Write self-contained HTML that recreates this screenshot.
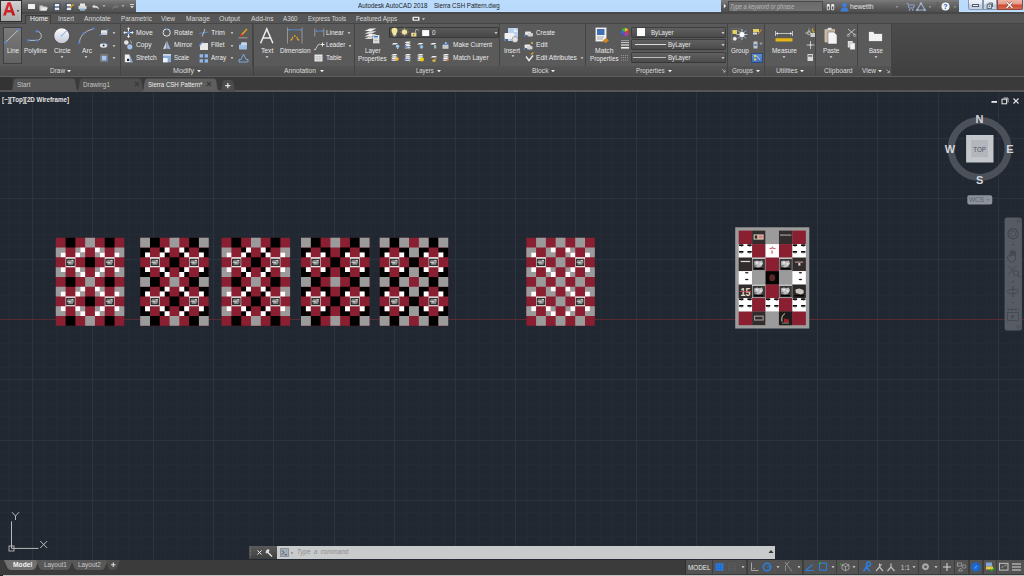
<!DOCTYPE html>
<html><head><meta charset="utf-8">
<style>
*{margin:0;padding:0;box-sizing:border-box}
html,body{width:1024px;height:576px;overflow:hidden;background:#222831;font-family:"Liberation Sans",sans-serif}
.a{position:absolute}
.t{position:absolute;white-space:nowrap;color:#e8e8e8;font-size:6.35px;line-height:6.35px}
svg{overflow:visible}
</style></head><body>
<svg class="a" style="left:0;top:0" width="1024" height="576" viewBox="0 0 1024 576" shape-rendering="crispEdges">
<rect x="-16.52" y="91" width="1" height="469" fill="#252b34"/>
<rect x="-4.44" y="91" width="1" height="469" fill="#252b34"/>
<rect x="7.64" y="91" width="1" height="469" fill="#252b34"/>
<rect x="19.72" y="91" width="1" height="469" fill="#252b34"/>
<rect x="43.88" y="91" width="1" height="469" fill="#252b34"/>
<rect x="55.96" y="91" width="1" height="469" fill="#252b34"/>
<rect x="68.04" y="91" width="1" height="469" fill="#252b34"/>
<rect x="80.12" y="91" width="1" height="469" fill="#252b34"/>
<rect x="104.28" y="91" width="1" height="469" fill="#252b34"/>
<rect x="116.36" y="91" width="1" height="469" fill="#252b34"/>
<rect x="128.44" y="91" width="1" height="469" fill="#252b34"/>
<rect x="140.52" y="91" width="1" height="469" fill="#252b34"/>
<rect x="164.68" y="91" width="1" height="469" fill="#252b34"/>
<rect x="176.76" y="91" width="1" height="469" fill="#252b34"/>
<rect x="188.84" y="91" width="1" height="469" fill="#252b34"/>
<rect x="200.92" y="91" width="1" height="469" fill="#252b34"/>
<rect x="225.08" y="91" width="1" height="469" fill="#252b34"/>
<rect x="237.16" y="91" width="1" height="469" fill="#252b34"/>
<rect x="249.24" y="91" width="1" height="469" fill="#252b34"/>
<rect x="261.32" y="91" width="1" height="469" fill="#252b34"/>
<rect x="285.48" y="91" width="1" height="469" fill="#252b34"/>
<rect x="297.56" y="91" width="1" height="469" fill="#252b34"/>
<rect x="309.64" y="91" width="1" height="469" fill="#252b34"/>
<rect x="321.72" y="91" width="1" height="469" fill="#252b34"/>
<rect x="345.88" y="91" width="1" height="469" fill="#252b34"/>
<rect x="357.96" y="91" width="1" height="469" fill="#252b34"/>
<rect x="370.04" y="91" width="1" height="469" fill="#252b34"/>
<rect x="382.12" y="91" width="1" height="469" fill="#252b34"/>
<rect x="406.28" y="91" width="1" height="469" fill="#252b34"/>
<rect x="418.36" y="91" width="1" height="469" fill="#252b34"/>
<rect x="430.44" y="91" width="1" height="469" fill="#252b34"/>
<rect x="442.52" y="91" width="1" height="469" fill="#252b34"/>
<rect x="466.68" y="91" width="1" height="469" fill="#252b34"/>
<rect x="478.76" y="91" width="1" height="469" fill="#252b34"/>
<rect x="490.84" y="91" width="1" height="469" fill="#252b34"/>
<rect x="502.92" y="91" width="1" height="469" fill="#252b34"/>
<rect x="527.08" y="91" width="1" height="469" fill="#252b34"/>
<rect x="539.16" y="91" width="1" height="469" fill="#252b34"/>
<rect x="551.24" y="91" width="1" height="469" fill="#252b34"/>
<rect x="563.32" y="91" width="1" height="469" fill="#252b34"/>
<rect x="587.48" y="91" width="1" height="469" fill="#252b34"/>
<rect x="599.56" y="91" width="1" height="469" fill="#252b34"/>
<rect x="611.64" y="91" width="1" height="469" fill="#252b34"/>
<rect x="623.72" y="91" width="1" height="469" fill="#252b34"/>
<rect x="647.88" y="91" width="1" height="469" fill="#252b34"/>
<rect x="659.96" y="91" width="1" height="469" fill="#252b34"/>
<rect x="672.04" y="91" width="1" height="469" fill="#252b34"/>
<rect x="684.12" y="91" width="1" height="469" fill="#252b34"/>
<rect x="708.28" y="91" width="1" height="469" fill="#252b34"/>
<rect x="720.36" y="91" width="1" height="469" fill="#252b34"/>
<rect x="732.44" y="91" width="1" height="469" fill="#252b34"/>
<rect x="744.52" y="91" width="1" height="469" fill="#252b34"/>
<rect x="768.68" y="91" width="1" height="469" fill="#252b34"/>
<rect x="780.76" y="91" width="1" height="469" fill="#252b34"/>
<rect x="792.84" y="91" width="1" height="469" fill="#252b34"/>
<rect x="804.92" y="91" width="1" height="469" fill="#252b34"/>
<rect x="829.08" y="91" width="1" height="469" fill="#252b34"/>
<rect x="841.16" y="91" width="1" height="469" fill="#252b34"/>
<rect x="853.24" y="91" width="1" height="469" fill="#252b34"/>
<rect x="865.32" y="91" width="1" height="469" fill="#252b34"/>
<rect x="889.48" y="91" width="1" height="469" fill="#252b34"/>
<rect x="901.56" y="91" width="1" height="469" fill="#252b34"/>
<rect x="913.64" y="91" width="1" height="469" fill="#252b34"/>
<rect x="925.72" y="91" width="1" height="469" fill="#252b34"/>
<rect x="949.88" y="91" width="1" height="469" fill="#252b34"/>
<rect x="961.96" y="91" width="1" height="469" fill="#252b34"/>
<rect x="974.04" y="91" width="1" height="469" fill="#252b34"/>
<rect x="986.12" y="91" width="1" height="469" fill="#252b34"/>
<rect x="1010.28" y="91" width="1" height="469" fill="#252b34"/>
<rect x="1022.36" y="91" width="1" height="469" fill="#252b34"/>
<rect x="0" y="89.38" width="1024" height="1" fill="#252b34"/>
<rect x="0" y="101.46" width="1024" height="1" fill="#252b34"/>
<rect x="0" y="113.54" width="1024" height="1" fill="#252b34"/>
<rect x="0" y="125.62" width="1024" height="1" fill="#252b34"/>
<rect x="0" y="149.78" width="1024" height="1" fill="#252b34"/>
<rect x="0" y="161.86" width="1024" height="1" fill="#252b34"/>
<rect x="0" y="173.94" width="1024" height="1" fill="#252b34"/>
<rect x="0" y="186.02" width="1024" height="1" fill="#252b34"/>
<rect x="0" y="210.18" width="1024" height="1" fill="#252b34"/>
<rect x="0" y="222.26" width="1024" height="1" fill="#252b34"/>
<rect x="0" y="234.34" width="1024" height="1" fill="#252b34"/>
<rect x="0" y="246.42" width="1024" height="1" fill="#252b34"/>
<rect x="0" y="270.58" width="1024" height="1" fill="#252b34"/>
<rect x="0" y="282.66" width="1024" height="1" fill="#252b34"/>
<rect x="0" y="294.74" width="1024" height="1" fill="#252b34"/>
<rect x="0" y="306.82" width="1024" height="1" fill="#252b34"/>
<rect x="0" y="330.98" width="1024" height="1" fill="#252b34"/>
<rect x="0" y="343.06" width="1024" height="1" fill="#252b34"/>
<rect x="0" y="355.14" width="1024" height="1" fill="#252b34"/>
<rect x="0" y="367.22" width="1024" height="1" fill="#252b34"/>
<rect x="0" y="391.38" width="1024" height="1" fill="#252b34"/>
<rect x="0" y="403.46" width="1024" height="1" fill="#252b34"/>
<rect x="0" y="415.54" width="1024" height="1" fill="#252b34"/>
<rect x="0" y="427.62" width="1024" height="1" fill="#252b34"/>
<rect x="0" y="451.78" width="1024" height="1" fill="#252b34"/>
<rect x="0" y="463.86" width="1024" height="1" fill="#252b34"/>
<rect x="0" y="475.94" width="1024" height="1" fill="#252b34"/>
<rect x="0" y="488.02" width="1024" height="1" fill="#252b34"/>
<rect x="0" y="512.18" width="1024" height="1" fill="#252b34"/>
<rect x="0" y="524.26" width="1024" height="1" fill="#252b34"/>
<rect x="0" y="536.34" width="1024" height="1" fill="#252b34"/>
<rect x="0" y="548.42" width="1024" height="1" fill="#252b34"/>
<rect x="-28.60" y="91" width="1" height="469" fill="#2b3240"/>
<rect x="31.80" y="91" width="1" height="469" fill="#2b3240"/>
<rect x="92.20" y="91" width="1" height="469" fill="#2b3240"/>
<rect x="152.60" y="91" width="1" height="469" fill="#2b3240"/>
<rect x="213.00" y="91" width="1" height="469" fill="#2b3240"/>
<rect x="273.40" y="91" width="1" height="469" fill="#2b3240"/>
<rect x="333.80" y="91" width="1" height="469" fill="#2b3240"/>
<rect x="394.20" y="91" width="1" height="469" fill="#2b3240"/>
<rect x="454.60" y="91" width="1" height="469" fill="#2b3240"/>
<rect x="515.00" y="91" width="1" height="469" fill="#2b3240"/>
<rect x="575.40" y="91" width="1" height="469" fill="#2b3240"/>
<rect x="635.80" y="91" width="1" height="469" fill="#2b3240"/>
<rect x="696.20" y="91" width="1" height="469" fill="#2b3240"/>
<rect x="756.60" y="91" width="1" height="469" fill="#2b3240"/>
<rect x="817.00" y="91" width="1" height="469" fill="#2b3240"/>
<rect x="877.40" y="91" width="1" height="469" fill="#2b3240"/>
<rect x="937.80" y="91" width="1" height="469" fill="#2b3240"/>
<rect x="998.20" y="91" width="1" height="469" fill="#2b3240"/>
<rect x="0" y="77.30" width="1024" height="1" fill="#2b3240"/>
<rect x="0" y="137.70" width="1024" height="1" fill="#2b3240"/>
<rect x="0" y="198.10" width="1024" height="1" fill="#2b3240"/>
<rect x="0" y="258.50" width="1024" height="1" fill="#2b3240"/>
<rect x="0" y="318.90" width="1024" height="1" fill="#2b3240"/>
<rect x="0" y="379.30" width="1024" height="1" fill="#2b3240"/>
<rect x="0" y="439.70" width="1024" height="1" fill="#2b3240"/>
<rect x="0" y="500.10" width="1024" height="1" fill="#2b3240"/>
<rect x="0" y="560.50" width="1024" height="1" fill="#2b3240"/>
<rect x="0" y="318.9" width="1024" height="1" fill="#5a2a33"/>
<g shape-rendering="geometricPrecision">
<rect x="55.80" y="237.80" width="68.50" height="88.00" fill="#891f30"/>
<path d="M65.59 237.80h9.79v9.78h-9.79zM104.73 237.80h9.79v9.78h-9.79zM85.16 257.36h9.79v9.78h-9.79zM65.59 276.91h9.79v9.78h-9.79zM104.73 276.91h9.79v9.78h-9.79zM85.16 296.47h9.79v9.78h-9.79zM65.59 316.02h9.79v9.78h-9.79zM104.73 316.02h9.79v9.78h-9.79z" fill="#000000"/>
<path d="M85.16 237.80h9.79v9.78h-9.79zM55.80 247.58h4.89v4.89h-4.89zM60.69 247.58h4.89v4.89h-4.89zM55.80 252.47h4.89v4.89h-4.89zM75.37 247.58h4.89v4.89h-4.89zM80.27 252.47h4.89v4.89h-4.89zM99.84 247.58h4.89v4.89h-4.89zM94.94 252.47h4.89v4.89h-4.89zM114.52 247.58h4.89v4.89h-4.89zM119.41 247.58h4.89v4.89h-4.89zM119.41 252.47h4.89v4.89h-4.89zM55.80 267.13h4.89v4.89h-4.89zM55.80 272.02h4.89v4.89h-4.89zM60.69 272.02h4.89v4.89h-4.89zM80.27 267.13h4.89v4.89h-4.89zM75.37 272.02h4.89v4.89h-4.89zM94.94 267.13h4.89v4.89h-4.89zM99.84 272.02h4.89v4.89h-4.89zM119.41 267.13h4.89v4.89h-4.89zM114.52 272.02h4.89v4.89h-4.89zM119.41 272.02h4.89v4.89h-4.89zM85.16 276.91h9.79v9.78h-9.79zM55.80 286.69h4.89v4.89h-4.89zM60.69 286.69h4.89v4.89h-4.89zM55.80 291.58h4.89v4.89h-4.89zM75.37 286.69h4.89v4.89h-4.89zM80.27 291.58h4.89v4.89h-4.89zM99.84 286.69h4.89v4.89h-4.89zM94.94 291.58h4.89v4.89h-4.89zM114.52 286.69h4.89v4.89h-4.89zM119.41 286.69h4.89v4.89h-4.89zM119.41 291.58h4.89v4.89h-4.89zM55.80 306.25h4.89v4.89h-4.89zM55.80 311.13h4.89v4.89h-4.89zM60.69 311.13h4.89v4.89h-4.89zM80.27 306.25h4.89v4.89h-4.89zM75.37 311.13h4.89v4.89h-4.89zM94.94 306.25h4.89v4.89h-4.89zM99.84 311.13h4.89v4.89h-4.89zM119.41 306.25h4.89v4.89h-4.89zM114.52 311.13h4.89v4.89h-4.89zM119.41 311.13h4.89v4.89h-4.89zM85.16 316.02h9.79v9.78h-9.79z" fill="#9b9b9b"/>
<path d="M60.69 252.47h4.89v4.89h-4.89zM80.27 247.58h4.89v4.89h-4.89zM75.37 252.47h4.89v4.89h-4.89zM94.94 247.58h4.89v4.89h-4.89zM99.84 252.47h4.89v4.89h-4.89zM114.52 252.47h4.89v4.89h-4.89zM65.59 257.36h9.79v9.78h-9.79zM104.73 257.36h9.79v9.78h-9.79zM60.69 267.13h4.89v4.89h-4.89zM75.37 267.13h4.89v4.89h-4.89zM80.27 272.02h4.89v4.89h-4.89zM99.84 267.13h4.89v4.89h-4.89zM94.94 272.02h4.89v4.89h-4.89zM114.52 267.13h4.89v4.89h-4.89zM60.69 291.58h4.89v4.89h-4.89zM80.27 286.69h4.89v4.89h-4.89zM75.37 291.58h4.89v4.89h-4.89zM94.94 286.69h4.89v4.89h-4.89zM99.84 291.58h4.89v4.89h-4.89zM114.52 291.58h4.89v4.89h-4.89zM65.59 296.47h9.79v9.78h-9.79zM104.73 296.47h9.79v9.78h-9.79zM60.69 306.25h4.89v4.89h-4.89zM75.37 306.25h4.89v4.89h-4.89zM80.27 311.13h4.89v4.89h-4.89zM99.84 306.25h4.89v4.89h-4.89zM94.94 311.13h4.89v4.89h-4.89zM114.52 306.25h4.89v4.89h-4.89z" fill="#ffffff"/>
<rect x="66.09" y="258.66" width="8.79" height="7.48" fill="#303030"/>
<rect x="67.54" y="260.09" width="5.87" height="1.37" fill="#8a8a8a"/>
<rect x="67.05" y="261.46" width="3.43" height="1.56" fill="#b8b8b8"/>
<rect x="70.28" y="261.27" width="3.43" height="1.96" fill="#9a9a9a"/>
<rect x="68.03" y="263.22" width="4.89" height="1.37" fill="#a8a8a8"/>
<rect x="71.46" y="259.90" width="1.96" height="1.17" fill="#d0d0d0"/>
<rect x="69.01" y="262.25" width="1.96" height="0.98" fill="#e0e0e0"/>
<rect x="105.23" y="258.66" width="8.79" height="7.48" fill="#303030"/>
<rect x="106.69" y="260.09" width="5.87" height="1.37" fill="#8a8a8a"/>
<rect x="106.20" y="261.46" width="3.43" height="1.56" fill="#b8b8b8"/>
<rect x="109.43" y="261.27" width="3.43" height="1.96" fill="#9a9a9a"/>
<rect x="107.18" y="263.22" width="4.89" height="1.37" fill="#a8a8a8"/>
<rect x="110.60" y="259.90" width="1.96" height="1.17" fill="#d0d0d0"/>
<rect x="108.16" y="262.25" width="1.96" height="0.98" fill="#e0e0e0"/>
<rect x="66.09" y="297.77" width="8.79" height="7.48" fill="#303030"/>
<rect x="67.54" y="299.21" width="5.87" height="1.37" fill="#8a8a8a"/>
<rect x="67.05" y="300.57" width="3.43" height="1.56" fill="#b8b8b8"/>
<rect x="70.28" y="300.38" width="3.43" height="1.96" fill="#9a9a9a"/>
<rect x="68.03" y="302.33" width="4.89" height="1.37" fill="#a8a8a8"/>
<rect x="71.46" y="299.01" width="1.96" height="1.17" fill="#d0d0d0"/>
<rect x="69.01" y="301.36" width="1.96" height="0.98" fill="#e0e0e0"/>
<rect x="105.23" y="297.77" width="8.79" height="7.48" fill="#303030"/>
<rect x="106.69" y="299.21" width="5.87" height="1.37" fill="#8a8a8a"/>
<rect x="106.20" y="300.57" width="3.43" height="1.56" fill="#b8b8b8"/>
<rect x="109.43" y="300.38" width="3.43" height="1.96" fill="#9a9a9a"/>
<rect x="107.18" y="302.33" width="4.89" height="1.37" fill="#a8a8a8"/>
<rect x="110.60" y="299.01" width="1.96" height="1.17" fill="#d0d0d0"/>
<rect x="108.16" y="301.36" width="1.96" height="0.98" fill="#e0e0e0"/>
<rect x="140.20" y="237.80" width="68.50" height="88.00" fill="#891f30"/>
<path d="M149.99 237.80h9.79v9.78h-9.79zM189.13 237.80h9.79v9.78h-9.79zM140.20 247.58h4.89v4.89h-4.89zM145.09 247.58h4.89v4.89h-4.89zM140.20 252.47h4.89v4.89h-4.89zM159.77 247.58h4.89v4.89h-4.89zM164.66 252.47h4.89v4.89h-4.89zM184.24 247.58h4.89v4.89h-4.89zM179.34 252.47h4.89v4.89h-4.89zM198.92 247.58h4.89v4.89h-4.89zM203.81 247.58h4.89v4.89h-4.89zM203.81 252.47h4.89v4.89h-4.89zM169.56 257.36h9.79v9.78h-9.79zM140.20 267.13h4.89v4.89h-4.89zM140.20 272.02h4.89v4.89h-4.89zM145.09 272.02h4.89v4.89h-4.89zM164.66 267.13h4.89v4.89h-4.89zM159.77 272.02h4.89v4.89h-4.89zM179.34 267.13h4.89v4.89h-4.89zM184.24 272.02h4.89v4.89h-4.89zM203.81 267.13h4.89v4.89h-4.89zM198.92 272.02h4.89v4.89h-4.89zM203.81 272.02h4.89v4.89h-4.89zM149.99 276.91h9.79v9.78h-9.79zM189.13 276.91h9.79v9.78h-9.79zM140.20 286.69h4.89v4.89h-4.89zM145.09 286.69h4.89v4.89h-4.89zM140.20 291.58h4.89v4.89h-4.89zM159.77 286.69h4.89v4.89h-4.89zM164.66 291.58h4.89v4.89h-4.89zM184.24 286.69h4.89v4.89h-4.89zM179.34 291.58h4.89v4.89h-4.89zM198.92 286.69h4.89v4.89h-4.89zM203.81 286.69h4.89v4.89h-4.89zM203.81 291.58h4.89v4.89h-4.89zM169.56 296.47h9.79v9.78h-9.79zM140.20 306.25h4.89v4.89h-4.89zM140.20 311.13h4.89v4.89h-4.89zM145.09 311.13h4.89v4.89h-4.89zM164.66 306.25h4.89v4.89h-4.89zM159.77 311.13h4.89v4.89h-4.89zM179.34 306.25h4.89v4.89h-4.89zM184.24 311.13h4.89v4.89h-4.89zM203.81 306.25h4.89v4.89h-4.89zM198.92 311.13h4.89v4.89h-4.89zM203.81 311.13h4.89v4.89h-4.89zM149.99 316.02h9.79v9.78h-9.79zM189.13 316.02h9.79v9.78h-9.79z" fill="#000000"/>
<path d="M140.20 237.80h9.79v9.78h-9.79zM169.56 237.80h9.79v9.78h-9.79zM198.92 237.80h9.79v9.78h-9.79zM140.20 276.91h9.79v9.78h-9.79zM169.56 276.91h9.79v9.78h-9.79zM198.92 276.91h9.79v9.78h-9.79zM140.20 316.02h9.79v9.78h-9.79zM169.56 316.02h9.79v9.78h-9.79zM198.92 316.02h9.79v9.78h-9.79z" fill="#9b9b9b"/>
<path d="M145.09 252.47h4.89v4.89h-4.89zM164.66 247.58h4.89v4.89h-4.89zM159.77 252.47h4.89v4.89h-4.89zM179.34 247.58h4.89v4.89h-4.89zM184.24 252.47h4.89v4.89h-4.89zM198.92 252.47h4.89v4.89h-4.89zM149.99 257.36h9.79v9.78h-9.79zM189.13 257.36h9.79v9.78h-9.79zM145.09 267.13h4.89v4.89h-4.89zM159.77 267.13h4.89v4.89h-4.89zM164.66 272.02h4.89v4.89h-4.89zM184.24 267.13h4.89v4.89h-4.89zM179.34 272.02h4.89v4.89h-4.89zM198.92 267.13h4.89v4.89h-4.89zM145.09 291.58h4.89v4.89h-4.89zM164.66 286.69h4.89v4.89h-4.89zM159.77 291.58h4.89v4.89h-4.89zM179.34 286.69h4.89v4.89h-4.89zM184.24 291.58h4.89v4.89h-4.89zM198.92 291.58h4.89v4.89h-4.89zM149.99 296.47h9.79v9.78h-9.79zM189.13 296.47h9.79v9.78h-9.79zM145.09 306.25h4.89v4.89h-4.89zM159.77 306.25h4.89v4.89h-4.89zM164.66 311.13h4.89v4.89h-4.89zM184.24 306.25h4.89v4.89h-4.89zM179.34 311.13h4.89v4.89h-4.89zM198.92 306.25h4.89v4.89h-4.89z" fill="#ffffff"/>
<rect x="150.49" y="258.66" width="8.79" height="7.48" fill="#303030"/>
<rect x="151.94" y="260.09" width="5.87" height="1.37" fill="#8a8a8a"/>
<rect x="151.45" y="261.46" width="3.43" height="1.56" fill="#b8b8b8"/>
<rect x="154.68" y="261.27" width="3.43" height="1.96" fill="#9a9a9a"/>
<rect x="152.43" y="263.22" width="4.89" height="1.37" fill="#a8a8a8"/>
<rect x="155.86" y="259.90" width="1.96" height="1.17" fill="#d0d0d0"/>
<rect x="153.41" y="262.25" width="1.96" height="0.98" fill="#e0e0e0"/>
<rect x="189.63" y="258.66" width="8.79" height="7.48" fill="#303030"/>
<rect x="191.09" y="260.09" width="5.87" height="1.37" fill="#8a8a8a"/>
<rect x="190.60" y="261.46" width="3.43" height="1.56" fill="#b8b8b8"/>
<rect x="193.83" y="261.27" width="3.43" height="1.96" fill="#9a9a9a"/>
<rect x="191.58" y="263.22" width="4.89" height="1.37" fill="#a8a8a8"/>
<rect x="195.00" y="259.90" width="1.96" height="1.17" fill="#d0d0d0"/>
<rect x="192.56" y="262.25" width="1.96" height="0.98" fill="#e0e0e0"/>
<rect x="150.49" y="297.77" width="8.79" height="7.48" fill="#303030"/>
<rect x="151.94" y="299.21" width="5.87" height="1.37" fill="#8a8a8a"/>
<rect x="151.45" y="300.57" width="3.43" height="1.56" fill="#b8b8b8"/>
<rect x="154.68" y="300.38" width="3.43" height="1.96" fill="#9a9a9a"/>
<rect x="152.43" y="302.33" width="4.89" height="1.37" fill="#a8a8a8"/>
<rect x="155.86" y="299.01" width="1.96" height="1.17" fill="#d0d0d0"/>
<rect x="153.41" y="301.36" width="1.96" height="0.98" fill="#e0e0e0"/>
<rect x="189.63" y="297.77" width="8.79" height="7.48" fill="#303030"/>
<rect x="191.09" y="299.21" width="5.87" height="1.37" fill="#8a8a8a"/>
<rect x="190.60" y="300.57" width="3.43" height="1.56" fill="#b8b8b8"/>
<rect x="193.83" y="300.38" width="3.43" height="1.96" fill="#9a9a9a"/>
<rect x="191.58" y="302.33" width="4.89" height="1.37" fill="#a8a8a8"/>
<rect x="195.00" y="299.01" width="1.96" height="1.17" fill="#d0d0d0"/>
<rect x="192.56" y="301.36" width="1.96" height="0.98" fill="#e0e0e0"/>
<rect x="221.60" y="237.80" width="68.50" height="88.00" fill="#891f30"/>
<path d="M231.39 237.80h9.79v9.78h-9.79zM270.53 237.80h9.79v9.78h-9.79zM241.17 247.58h4.89v4.89h-4.89zM246.06 252.47h4.89v4.89h-4.89zM265.64 247.58h4.89v4.89h-4.89zM260.74 252.47h4.89v4.89h-4.89zM250.96 257.36h9.79v9.78h-9.79zM246.06 267.13h4.89v4.89h-4.89zM241.17 272.02h4.89v4.89h-4.89zM260.74 267.13h4.89v4.89h-4.89zM265.64 272.02h4.89v4.89h-4.89zM231.39 276.91h9.79v9.78h-9.79zM270.53 276.91h9.79v9.78h-9.79zM241.17 286.69h4.89v4.89h-4.89zM246.06 291.58h4.89v4.89h-4.89zM265.64 286.69h4.89v4.89h-4.89zM260.74 291.58h4.89v4.89h-4.89zM250.96 296.47h9.79v9.78h-9.79zM246.06 306.25h4.89v4.89h-4.89zM241.17 311.13h4.89v4.89h-4.89zM260.74 306.25h4.89v4.89h-4.89zM265.64 311.13h4.89v4.89h-4.89zM231.39 316.02h9.79v9.78h-9.79zM270.53 316.02h9.79v9.78h-9.79z" fill="#000000"/>
<path d="M250.96 237.80h9.79v9.78h-9.79zM221.60 247.58h4.89v4.89h-4.89zM226.49 247.58h4.89v4.89h-4.89zM221.60 252.47h4.89v4.89h-4.89zM280.32 247.58h4.89v4.89h-4.89zM285.21 247.58h4.89v4.89h-4.89zM285.21 252.47h4.89v4.89h-4.89zM221.60 267.13h4.89v4.89h-4.89zM221.60 272.02h4.89v4.89h-4.89zM226.49 272.02h4.89v4.89h-4.89zM285.21 267.13h4.89v4.89h-4.89zM280.32 272.02h4.89v4.89h-4.89zM285.21 272.02h4.89v4.89h-4.89zM250.96 276.91h9.79v9.78h-9.79zM221.60 286.69h4.89v4.89h-4.89zM226.49 286.69h4.89v4.89h-4.89zM221.60 291.58h4.89v4.89h-4.89zM280.32 286.69h4.89v4.89h-4.89zM285.21 286.69h4.89v4.89h-4.89zM285.21 291.58h4.89v4.89h-4.89zM221.60 306.25h4.89v4.89h-4.89zM221.60 311.13h4.89v4.89h-4.89zM226.49 311.13h4.89v4.89h-4.89zM285.21 306.25h4.89v4.89h-4.89zM280.32 311.13h4.89v4.89h-4.89zM285.21 311.13h4.89v4.89h-4.89zM250.96 316.02h9.79v9.78h-9.79z" fill="#9b9b9b"/>
<path d="M226.49 252.47h4.89v4.89h-4.89zM246.06 247.58h4.89v4.89h-4.89zM241.17 252.47h4.89v4.89h-4.89zM260.74 247.58h4.89v4.89h-4.89zM265.64 252.47h4.89v4.89h-4.89zM280.32 252.47h4.89v4.89h-4.89zM231.39 257.36h9.79v9.78h-9.79zM270.53 257.36h9.79v9.78h-9.79zM226.49 267.13h4.89v4.89h-4.89zM241.17 267.13h4.89v4.89h-4.89zM246.06 272.02h4.89v4.89h-4.89zM265.64 267.13h4.89v4.89h-4.89zM260.74 272.02h4.89v4.89h-4.89zM280.32 267.13h4.89v4.89h-4.89zM226.49 291.58h4.89v4.89h-4.89zM246.06 286.69h4.89v4.89h-4.89zM241.17 291.58h4.89v4.89h-4.89zM260.74 286.69h4.89v4.89h-4.89zM265.64 291.58h4.89v4.89h-4.89zM280.32 291.58h4.89v4.89h-4.89zM231.39 296.47h9.79v9.78h-9.79zM270.53 296.47h9.79v9.78h-9.79zM226.49 306.25h4.89v4.89h-4.89zM241.17 306.25h4.89v4.89h-4.89zM246.06 311.13h4.89v4.89h-4.89zM265.64 306.25h4.89v4.89h-4.89zM260.74 311.13h4.89v4.89h-4.89zM280.32 306.25h4.89v4.89h-4.89z" fill="#ffffff"/>
<rect x="231.89" y="258.66" width="8.79" height="7.48" fill="#303030"/>
<rect x="233.34" y="260.09" width="5.87" height="1.37" fill="#8a8a8a"/>
<rect x="232.85" y="261.46" width="3.43" height="1.56" fill="#b8b8b8"/>
<rect x="236.08" y="261.27" width="3.43" height="1.96" fill="#9a9a9a"/>
<rect x="233.83" y="263.22" width="4.89" height="1.37" fill="#a8a8a8"/>
<rect x="237.26" y="259.90" width="1.96" height="1.17" fill="#d0d0d0"/>
<rect x="234.81" y="262.25" width="1.96" height="0.98" fill="#e0e0e0"/>
<rect x="271.03" y="258.66" width="8.79" height="7.48" fill="#303030"/>
<rect x="272.49" y="260.09" width="5.87" height="1.37" fill="#8a8a8a"/>
<rect x="272.00" y="261.46" width="3.43" height="1.56" fill="#b8b8b8"/>
<rect x="275.23" y="261.27" width="3.43" height="1.96" fill="#9a9a9a"/>
<rect x="272.98" y="263.22" width="4.89" height="1.37" fill="#a8a8a8"/>
<rect x="276.40" y="259.90" width="1.96" height="1.17" fill="#d0d0d0"/>
<rect x="273.96" y="262.25" width="1.96" height="0.98" fill="#e0e0e0"/>
<rect x="231.89" y="297.77" width="8.79" height="7.48" fill="#303030"/>
<rect x="233.34" y="299.21" width="5.87" height="1.37" fill="#8a8a8a"/>
<rect x="232.85" y="300.57" width="3.43" height="1.56" fill="#b8b8b8"/>
<rect x="236.08" y="300.38" width="3.43" height="1.96" fill="#9a9a9a"/>
<rect x="233.83" y="302.33" width="4.89" height="1.37" fill="#a8a8a8"/>
<rect x="237.26" y="299.01" width="1.96" height="1.17" fill="#d0d0d0"/>
<rect x="234.81" y="301.36" width="1.96" height="0.98" fill="#e0e0e0"/>
<rect x="271.03" y="297.77" width="8.79" height="7.48" fill="#303030"/>
<rect x="272.49" y="299.21" width="5.87" height="1.37" fill="#8a8a8a"/>
<rect x="272.00" y="300.57" width="3.43" height="1.56" fill="#b8b8b8"/>
<rect x="275.23" y="300.38" width="3.43" height="1.96" fill="#9a9a9a"/>
<rect x="272.98" y="302.33" width="4.89" height="1.37" fill="#a8a8a8"/>
<rect x="276.40" y="299.01" width="1.96" height="1.17" fill="#d0d0d0"/>
<rect x="273.96" y="301.36" width="1.96" height="0.98" fill="#e0e0e0"/>
<rect x="301.00" y="237.80" width="68.50" height="88.00" fill="#891f30"/>
<path d="M310.79 237.80h9.79v9.78h-9.79zM349.93 237.80h9.79v9.78h-9.79zM301.00 247.58h4.89v4.89h-4.89zM305.89 247.58h4.89v4.89h-4.89zM301.00 252.47h4.89v4.89h-4.89zM320.57 247.58h4.89v4.89h-4.89zM325.46 247.58h4.89v4.89h-4.89zM325.46 252.47h4.89v4.89h-4.89zM340.14 247.58h4.89v4.89h-4.89zM345.04 247.58h4.89v4.89h-4.89zM340.14 252.47h4.89v4.89h-4.89zM359.72 247.58h4.89v4.89h-4.89zM364.61 247.58h4.89v4.89h-4.89zM364.61 252.47h4.89v4.89h-4.89zM330.36 257.36h9.79v9.78h-9.79zM301.00 267.13h4.89v4.89h-4.89zM301.00 272.02h4.89v4.89h-4.89zM305.89 272.02h4.89v4.89h-4.89zM325.46 267.13h4.89v4.89h-4.89zM320.57 272.02h4.89v4.89h-4.89zM325.46 272.02h4.89v4.89h-4.89zM340.14 267.13h4.89v4.89h-4.89zM340.14 272.02h4.89v4.89h-4.89zM345.04 272.02h4.89v4.89h-4.89zM364.61 267.13h4.89v4.89h-4.89zM359.72 272.02h4.89v4.89h-4.89zM364.61 272.02h4.89v4.89h-4.89zM310.79 276.91h9.79v9.78h-9.79zM349.93 276.91h9.79v9.78h-9.79zM301.00 286.69h4.89v4.89h-4.89zM305.89 286.69h4.89v4.89h-4.89zM301.00 291.58h4.89v4.89h-4.89zM320.57 286.69h4.89v4.89h-4.89zM325.46 286.69h4.89v4.89h-4.89zM325.46 291.58h4.89v4.89h-4.89zM340.14 286.69h4.89v4.89h-4.89zM345.04 286.69h4.89v4.89h-4.89zM340.14 291.58h4.89v4.89h-4.89zM359.72 286.69h4.89v4.89h-4.89zM364.61 286.69h4.89v4.89h-4.89zM364.61 291.58h4.89v4.89h-4.89zM330.36 296.47h9.79v9.78h-9.79zM301.00 306.25h4.89v4.89h-4.89zM301.00 311.13h4.89v4.89h-4.89zM305.89 311.13h4.89v4.89h-4.89zM325.46 306.25h4.89v4.89h-4.89zM320.57 311.13h4.89v4.89h-4.89zM325.46 311.13h4.89v4.89h-4.89zM340.14 306.25h4.89v4.89h-4.89zM340.14 311.13h4.89v4.89h-4.89zM345.04 311.13h4.89v4.89h-4.89zM364.61 306.25h4.89v4.89h-4.89zM359.72 311.13h4.89v4.89h-4.89zM364.61 311.13h4.89v4.89h-4.89zM310.79 316.02h9.79v9.78h-9.79zM349.93 316.02h9.79v9.78h-9.79z" fill="#000000"/>
<path d="M301.00 237.80h9.79v9.78h-9.79zM330.36 237.80h9.79v9.78h-9.79zM359.72 237.80h9.79v9.78h-9.79zM301.00 276.91h9.79v9.78h-9.79zM330.36 276.91h9.79v9.78h-9.79zM359.72 276.91h9.79v9.78h-9.79zM301.00 316.02h9.79v9.78h-9.79zM330.36 316.02h9.79v9.78h-9.79zM359.72 316.02h9.79v9.78h-9.79z" fill="#9b9b9b"/>
<path d="M305.89 252.47h4.89v4.89h-4.89zM320.57 252.47h4.89v4.89h-4.89zM345.04 252.47h4.89v4.89h-4.89zM359.72 252.47h4.89v4.89h-4.89zM310.79 257.36h9.79v9.78h-9.79zM349.93 257.36h9.79v9.78h-9.79zM305.89 267.13h4.89v4.89h-4.89zM320.57 267.13h4.89v4.89h-4.89zM345.04 267.13h4.89v4.89h-4.89zM359.72 267.13h4.89v4.89h-4.89zM305.89 291.58h4.89v4.89h-4.89zM320.57 291.58h4.89v4.89h-4.89zM345.04 291.58h4.89v4.89h-4.89zM359.72 291.58h4.89v4.89h-4.89zM310.79 296.47h9.79v9.78h-9.79zM349.93 296.47h9.79v9.78h-9.79zM305.89 306.25h4.89v4.89h-4.89zM320.57 306.25h4.89v4.89h-4.89zM345.04 306.25h4.89v4.89h-4.89zM359.72 306.25h4.89v4.89h-4.89z" fill="#ffffff"/>
<rect x="311.29" y="258.66" width="8.79" height="7.48" fill="#303030"/>
<rect x="312.74" y="260.09" width="5.87" height="1.37" fill="#8a8a8a"/>
<rect x="312.25" y="261.46" width="3.43" height="1.56" fill="#b8b8b8"/>
<rect x="315.48" y="261.27" width="3.43" height="1.96" fill="#9a9a9a"/>
<rect x="313.23" y="263.22" width="4.89" height="1.37" fill="#a8a8a8"/>
<rect x="316.66" y="259.90" width="1.96" height="1.17" fill="#d0d0d0"/>
<rect x="314.21" y="262.25" width="1.96" height="0.98" fill="#e0e0e0"/>
<rect x="350.43" y="258.66" width="8.79" height="7.48" fill="#303030"/>
<rect x="351.89" y="260.09" width="5.87" height="1.37" fill="#8a8a8a"/>
<rect x="351.40" y="261.46" width="3.43" height="1.56" fill="#b8b8b8"/>
<rect x="354.63" y="261.27" width="3.43" height="1.96" fill="#9a9a9a"/>
<rect x="352.38" y="263.22" width="4.89" height="1.37" fill="#a8a8a8"/>
<rect x="355.80" y="259.90" width="1.96" height="1.17" fill="#d0d0d0"/>
<rect x="353.36" y="262.25" width="1.96" height="0.98" fill="#e0e0e0"/>
<rect x="311.29" y="297.77" width="8.79" height="7.48" fill="#303030"/>
<rect x="312.74" y="299.21" width="5.87" height="1.37" fill="#8a8a8a"/>
<rect x="312.25" y="300.57" width="3.43" height="1.56" fill="#b8b8b8"/>
<rect x="315.48" y="300.38" width="3.43" height="1.96" fill="#9a9a9a"/>
<rect x="313.23" y="302.33" width="4.89" height="1.37" fill="#a8a8a8"/>
<rect x="316.66" y="299.01" width="1.96" height="1.17" fill="#d0d0d0"/>
<rect x="314.21" y="301.36" width="1.96" height="0.98" fill="#e0e0e0"/>
<rect x="350.43" y="297.77" width="8.79" height="7.48" fill="#303030"/>
<rect x="351.89" y="299.21" width="5.87" height="1.37" fill="#8a8a8a"/>
<rect x="351.40" y="300.57" width="3.43" height="1.56" fill="#b8b8b8"/>
<rect x="354.63" y="300.38" width="3.43" height="1.96" fill="#9a9a9a"/>
<rect x="352.38" y="302.33" width="4.89" height="1.37" fill="#a8a8a8"/>
<rect x="355.80" y="299.01" width="1.96" height="1.17" fill="#d0d0d0"/>
<rect x="353.36" y="301.36" width="1.96" height="0.98" fill="#e0e0e0"/>
<rect x="379.70" y="237.80" width="68.50" height="88.00" fill="#891f30"/>
<path d="M389.49 237.80h9.79v9.78h-9.79zM428.63 237.80h9.79v9.78h-9.79zM379.70 247.58h4.89v4.89h-4.89zM384.59 247.58h4.89v4.89h-4.89zM379.70 252.47h4.89v4.89h-4.89zM399.27 247.58h4.89v4.89h-4.89zM404.16 247.58h4.89v4.89h-4.89zM404.16 252.47h4.89v4.89h-4.89zM418.84 247.58h4.89v4.89h-4.89zM423.74 247.58h4.89v4.89h-4.89zM418.84 252.47h4.89v4.89h-4.89zM438.42 247.58h4.89v4.89h-4.89zM443.31 247.58h4.89v4.89h-4.89zM443.31 252.47h4.89v4.89h-4.89zM409.06 257.36h9.79v9.78h-9.79zM379.70 267.13h4.89v4.89h-4.89zM379.70 272.02h4.89v4.89h-4.89zM384.59 272.02h4.89v4.89h-4.89zM404.16 267.13h4.89v4.89h-4.89zM399.27 272.02h4.89v4.89h-4.89zM404.16 272.02h4.89v4.89h-4.89zM418.84 267.13h4.89v4.89h-4.89zM418.84 272.02h4.89v4.89h-4.89zM423.74 272.02h4.89v4.89h-4.89zM443.31 267.13h4.89v4.89h-4.89zM438.42 272.02h4.89v4.89h-4.89zM443.31 272.02h4.89v4.89h-4.89zM389.49 276.91h9.79v9.78h-9.79zM428.63 276.91h9.79v9.78h-9.79zM379.70 286.69h4.89v4.89h-4.89zM384.59 286.69h4.89v4.89h-4.89zM379.70 291.58h4.89v4.89h-4.89zM399.27 286.69h4.89v4.89h-4.89zM404.16 286.69h4.89v4.89h-4.89zM404.16 291.58h4.89v4.89h-4.89zM418.84 286.69h4.89v4.89h-4.89zM423.74 286.69h4.89v4.89h-4.89zM418.84 291.58h4.89v4.89h-4.89zM438.42 286.69h4.89v4.89h-4.89zM443.31 286.69h4.89v4.89h-4.89zM443.31 291.58h4.89v4.89h-4.89zM409.06 296.47h9.79v9.78h-9.79zM379.70 306.25h4.89v4.89h-4.89zM379.70 311.13h4.89v4.89h-4.89zM384.59 311.13h4.89v4.89h-4.89zM404.16 306.25h4.89v4.89h-4.89zM399.27 311.13h4.89v4.89h-4.89zM404.16 311.13h4.89v4.89h-4.89zM418.84 306.25h4.89v4.89h-4.89zM418.84 311.13h4.89v4.89h-4.89zM423.74 311.13h4.89v4.89h-4.89zM443.31 306.25h4.89v4.89h-4.89zM438.42 311.13h4.89v4.89h-4.89zM443.31 311.13h4.89v4.89h-4.89zM389.49 316.02h9.79v9.78h-9.79zM428.63 316.02h9.79v9.78h-9.79z" fill="#000000"/>
<path d="M379.70 237.80h9.79v9.78h-9.79zM399.27 237.80h9.79v9.78h-9.79zM418.84 237.80h9.79v9.78h-9.79zM438.42 237.80h9.79v9.78h-9.79zM409.06 247.58h9.79v9.78h-9.79zM409.06 267.13h9.79v9.78h-9.79zM379.70 276.91h9.79v9.78h-9.79zM399.27 276.91h9.79v9.78h-9.79zM418.84 276.91h9.79v9.78h-9.79zM438.42 276.91h9.79v9.78h-9.79zM409.06 286.69h9.79v9.78h-9.79zM409.06 306.25h9.79v9.78h-9.79zM379.70 316.02h9.79v9.78h-9.79zM399.27 316.02h9.79v9.78h-9.79zM418.84 316.02h9.79v9.78h-9.79zM438.42 316.02h9.79v9.78h-9.79z" fill="#9b9b9b"/>
<path d="M384.59 252.47h4.89v4.89h-4.89zM399.27 252.47h4.89v4.89h-4.89zM423.74 252.47h4.89v4.89h-4.89zM438.42 252.47h4.89v4.89h-4.89zM389.49 257.36h9.79v9.78h-9.79zM428.63 257.36h9.79v9.78h-9.79zM384.59 267.13h4.89v4.89h-4.89zM399.27 267.13h4.89v4.89h-4.89zM423.74 267.13h4.89v4.89h-4.89zM438.42 267.13h4.89v4.89h-4.89zM384.59 291.58h4.89v4.89h-4.89zM399.27 291.58h4.89v4.89h-4.89zM423.74 291.58h4.89v4.89h-4.89zM438.42 291.58h4.89v4.89h-4.89zM389.49 296.47h9.79v9.78h-9.79zM428.63 296.47h9.79v9.78h-9.79zM384.59 306.25h4.89v4.89h-4.89zM399.27 306.25h4.89v4.89h-4.89zM423.74 306.25h4.89v4.89h-4.89zM438.42 306.25h4.89v4.89h-4.89z" fill="#ffffff"/>
<rect x="389.99" y="258.66" width="8.79" height="7.48" fill="#303030"/>
<rect x="391.44" y="260.09" width="5.87" height="1.37" fill="#8a8a8a"/>
<rect x="390.95" y="261.46" width="3.43" height="1.56" fill="#b8b8b8"/>
<rect x="394.18" y="261.27" width="3.43" height="1.96" fill="#9a9a9a"/>
<rect x="391.93" y="263.22" width="4.89" height="1.37" fill="#a8a8a8"/>
<rect x="395.36" y="259.90" width="1.96" height="1.17" fill="#d0d0d0"/>
<rect x="392.91" y="262.25" width="1.96" height="0.98" fill="#e0e0e0"/>
<rect x="429.13" y="258.66" width="8.79" height="7.48" fill="#303030"/>
<rect x="430.59" y="260.09" width="5.87" height="1.37" fill="#8a8a8a"/>
<rect x="430.10" y="261.46" width="3.43" height="1.56" fill="#b8b8b8"/>
<rect x="433.33" y="261.27" width="3.43" height="1.96" fill="#9a9a9a"/>
<rect x="431.08" y="263.22" width="4.89" height="1.37" fill="#a8a8a8"/>
<rect x="434.50" y="259.90" width="1.96" height="1.17" fill="#d0d0d0"/>
<rect x="432.06" y="262.25" width="1.96" height="0.98" fill="#e0e0e0"/>
<rect x="389.99" y="297.77" width="8.79" height="7.48" fill="#303030"/>
<rect x="391.44" y="299.21" width="5.87" height="1.37" fill="#8a8a8a"/>
<rect x="390.95" y="300.57" width="3.43" height="1.56" fill="#b8b8b8"/>
<rect x="394.18" y="300.38" width="3.43" height="1.96" fill="#9a9a9a"/>
<rect x="391.93" y="302.33" width="4.89" height="1.37" fill="#a8a8a8"/>
<rect x="395.36" y="299.01" width="1.96" height="1.17" fill="#d0d0d0"/>
<rect x="392.91" y="301.36" width="1.96" height="0.98" fill="#e0e0e0"/>
<rect x="429.13" y="297.77" width="8.79" height="7.48" fill="#303030"/>
<rect x="430.59" y="299.21" width="5.87" height="1.37" fill="#8a8a8a"/>
<rect x="430.10" y="300.57" width="3.43" height="1.56" fill="#b8b8b8"/>
<rect x="433.33" y="300.38" width="3.43" height="1.96" fill="#9a9a9a"/>
<rect x="431.08" y="302.33" width="4.89" height="1.37" fill="#a8a8a8"/>
<rect x="434.50" y="299.01" width="1.96" height="1.17" fill="#d0d0d0"/>
<rect x="432.06" y="301.36" width="1.96" height="0.98" fill="#e0e0e0"/>
<rect x="526.30" y="237.80" width="68.50" height="88.00" fill="#891f30"/>
<path d="M536.09 237.80h9.79v9.78h-9.79zM555.66 237.80h9.79v9.78h-9.79zM575.23 237.80h9.79v9.78h-9.79zM526.30 247.58h4.89v4.89h-4.89zM531.19 247.58h4.89v4.89h-4.89zM526.30 252.47h4.89v4.89h-4.89zM545.87 247.58h4.89v4.89h-4.89zM545.87 252.47h4.89v4.89h-4.89zM550.76 252.47h4.89v4.89h-4.89zM570.34 247.58h4.89v4.89h-4.89zM565.44 252.47h4.89v4.89h-4.89zM585.02 247.58h4.89v4.89h-4.89zM589.91 247.58h4.89v4.89h-4.89zM589.91 252.47h4.89v4.89h-4.89zM555.66 257.36h9.79v9.78h-9.79zM526.30 267.13h4.89v4.89h-4.89zM526.30 272.02h4.89v4.89h-4.89zM531.19 272.02h4.89v4.89h-4.89zM550.76 267.13h4.89v4.89h-4.89zM545.87 272.02h4.89v4.89h-4.89zM565.44 267.13h4.89v4.89h-4.89zM570.34 272.02h4.89v4.89h-4.89zM589.91 267.13h4.89v4.89h-4.89zM585.02 272.02h4.89v4.89h-4.89zM589.91 272.02h4.89v4.89h-4.89zM536.09 276.91h9.79v9.78h-9.79zM555.66 276.91h9.79v9.78h-9.79zM575.23 276.91h9.79v9.78h-9.79zM526.30 286.69h4.89v4.89h-4.89zM531.19 286.69h4.89v4.89h-4.89zM526.30 291.58h4.89v4.89h-4.89zM545.87 286.69h4.89v4.89h-4.89zM545.87 291.58h4.89v4.89h-4.89zM550.76 291.58h4.89v4.89h-4.89zM570.34 286.69h4.89v4.89h-4.89zM565.44 291.58h4.89v4.89h-4.89zM585.02 286.69h4.89v4.89h-4.89zM589.91 286.69h4.89v4.89h-4.89zM589.91 291.58h4.89v4.89h-4.89zM555.66 296.47h9.79v9.78h-9.79zM526.30 306.25h4.89v4.89h-4.89zM526.30 311.13h4.89v4.89h-4.89zM531.19 311.13h4.89v4.89h-4.89zM550.76 306.25h4.89v4.89h-4.89zM545.87 311.13h4.89v4.89h-4.89zM565.44 306.25h4.89v4.89h-4.89zM570.34 311.13h4.89v4.89h-4.89zM589.91 306.25h4.89v4.89h-4.89zM585.02 311.13h4.89v4.89h-4.89zM589.91 311.13h4.89v4.89h-4.89zM536.09 316.02h9.79v9.78h-9.79zM555.66 316.02h9.79v9.78h-9.79zM575.23 316.02h9.79v9.78h-9.79z" fill="#9b9b9b"/>
<path d="M531.19 252.47h4.89v4.89h-4.89zM550.76 247.58h4.89v4.89h-4.89zM565.44 247.58h4.89v4.89h-4.89zM570.34 252.47h4.89v4.89h-4.89zM585.02 252.47h4.89v4.89h-4.89zM536.09 257.36h9.79v9.78h-9.79zM575.23 257.36h9.79v9.78h-9.79zM531.19 267.13h4.89v4.89h-4.89zM545.87 267.13h4.89v4.89h-4.89zM550.76 272.02h4.89v4.89h-4.89zM570.34 267.13h4.89v4.89h-4.89zM565.44 272.02h4.89v4.89h-4.89zM585.02 267.13h4.89v4.89h-4.89zM531.19 291.58h4.89v4.89h-4.89zM550.76 286.69h4.89v4.89h-4.89zM565.44 286.69h4.89v4.89h-4.89zM570.34 291.58h4.89v4.89h-4.89zM585.02 291.58h4.89v4.89h-4.89zM536.09 296.47h9.79v9.78h-9.79zM575.23 296.47h9.79v9.78h-9.79zM531.19 306.25h4.89v4.89h-4.89zM545.87 306.25h4.89v4.89h-4.89zM550.76 311.13h4.89v4.89h-4.89zM570.34 306.25h4.89v4.89h-4.89zM565.44 311.13h4.89v4.89h-4.89zM585.02 306.25h4.89v4.89h-4.89z" fill="#ffffff"/>
<rect x="536.59" y="258.66" width="8.79" height="7.48" fill="#303030"/>
<rect x="538.04" y="260.09" width="5.87" height="1.37" fill="#8a8a8a"/>
<rect x="537.55" y="261.46" width="3.43" height="1.56" fill="#b8b8b8"/>
<rect x="540.78" y="261.27" width="3.43" height="1.96" fill="#9a9a9a"/>
<rect x="538.53" y="263.22" width="4.89" height="1.37" fill="#a8a8a8"/>
<rect x="541.96" y="259.90" width="1.96" height="1.17" fill="#d0d0d0"/>
<rect x="539.51" y="262.25" width="1.96" height="0.98" fill="#e0e0e0"/>
<rect x="575.73" y="258.66" width="8.79" height="7.48" fill="#303030"/>
<rect x="577.19" y="260.09" width="5.87" height="1.37" fill="#8a8a8a"/>
<rect x="576.70" y="261.46" width="3.43" height="1.56" fill="#b8b8b8"/>
<rect x="579.93" y="261.27" width="3.43" height="1.96" fill="#9a9a9a"/>
<rect x="577.68" y="263.22" width="4.89" height="1.37" fill="#a8a8a8"/>
<rect x="581.10" y="259.90" width="1.96" height="1.17" fill="#d0d0d0"/>
<rect x="578.66" y="262.25" width="1.96" height="0.98" fill="#e0e0e0"/>
<rect x="536.59" y="297.77" width="8.79" height="7.48" fill="#303030"/>
<rect x="538.04" y="299.21" width="5.87" height="1.37" fill="#8a8a8a"/>
<rect x="537.55" y="300.57" width="3.43" height="1.56" fill="#b8b8b8"/>
<rect x="540.78" y="300.38" width="3.43" height="1.96" fill="#9a9a9a"/>
<rect x="538.53" y="302.33" width="4.89" height="1.37" fill="#a8a8a8"/>
<rect x="541.96" y="299.01" width="1.96" height="1.17" fill="#d0d0d0"/>
<rect x="539.51" y="301.36" width="1.96" height="0.98" fill="#e0e0e0"/>
<rect x="575.73" y="297.77" width="8.79" height="7.48" fill="#303030"/>
<rect x="577.19" y="299.21" width="5.87" height="1.37" fill="#8a8a8a"/>
<rect x="576.70" y="300.57" width="3.43" height="1.56" fill="#b8b8b8"/>
<rect x="579.93" y="300.38" width="3.43" height="1.96" fill="#9a9a9a"/>
<rect x="577.68" y="302.33" width="4.89" height="1.37" fill="#a8a8a8"/>
<rect x="581.10" y="299.01" width="1.96" height="1.17" fill="#d0d0d0"/>
<rect x="578.66" y="301.36" width="1.96" height="0.98" fill="#e0e0e0"/>
<rect x="735.2" y="227.3" width="74.1" height="101.2" fill="#9c9c9c"/>
<rect x="738.70" y="230.60" width="13.47" height="13.55" fill="#891f30"/>
<rect x="752.12" y="230.60" width="13.47" height="13.55" fill="#332c2c"/>
<rect x="753.62" y="234.40" width="10" height="5.2" fill="#d8ccb4"/>
<rect x="754.72" y="235.40" width="2.6" height="3.2" fill="#332c2c"/>
<rect x="758.62" y="235.40" width="4" height="3" fill="#e07a88"/>
<rect x="765.54" y="230.60" width="13.47" height="13.55" fill="#9b9b9b"/>
<rect x="778.96" y="230.60" width="13.47" height="13.55" fill="#332c2c"/>
<rect x="779.96" y="234.60" width="11.42" height="0.9" fill="#c8c0b8"/>
<rect x="792.38" y="230.60" width="13.47" height="13.55" fill="#891f30"/>
<rect x="738.70" y="244.10" width="13.47" height="13.55" fill="#ffffff"/>
<rect x="739.00" y="244.30" width="4.5" height="1.7" rx="0.6" fill="#0a0a0a"/>
<rect x="740.60" y="245.90" width="1.8" height="0.9" fill="#888"/>
<rect x="747.30" y="244.30" width="4.5" height="1.7" rx="0.6" fill="#0a0a0a"/>
<rect x="748.90" y="245.90" width="1.8" height="0.9" fill="#888"/>
<rect x="739.00" y="251.00" width="4.5" height="1.7" rx="0.6" fill="#0a0a0a"/>
<rect x="740.60" y="252.60" width="1.8" height="0.9" fill="#888"/>
<rect x="747.30" y="251.00" width="4.5" height="1.7" rx="0.6" fill="#0a0a0a"/>
<rect x="748.90" y="252.60" width="1.8" height="0.9" fill="#888"/>
<rect x="752.12" y="244.10" width="13.47" height="13.55" fill="#891f30"/>
<rect x="765.54" y="244.10" width="13.47" height="13.55" fill="#ffffff"/>
<path d="M769.54 248.60 q3 -1 6 0" stroke="#c8324a" stroke-width="0.9" fill="none"/>
<path d="M772.04 250.60 v3" stroke="#c8324a" stroke-width="1" fill="none"/>
<circle cx="772.24" cy="247.10" r="0.6" fill="#c8324a"/>
<rect x="778.96" y="244.10" width="13.47" height="13.55" fill="#891f30"/>
<rect x="792.38" y="244.10" width="13.47" height="13.55" fill="#ffffff"/>
<rect x="792.68" y="244.30" width="4.5" height="1.7" rx="0.6" fill="#0a0a0a"/>
<rect x="794.28" y="245.90" width="1.8" height="0.9" fill="#888"/>
<rect x="800.98" y="244.30" width="4.5" height="1.7" rx="0.6" fill="#0a0a0a"/>
<rect x="802.58" y="245.90" width="1.8" height="0.9" fill="#888"/>
<rect x="792.68" y="251.00" width="4.5" height="1.7" rx="0.6" fill="#0a0a0a"/>
<rect x="794.28" y="252.60" width="1.8" height="0.9" fill="#888"/>
<rect x="800.98" y="251.00" width="4.5" height="1.7" rx="0.6" fill="#0a0a0a"/>
<rect x="802.58" y="252.60" width="1.8" height="0.9" fill="#888"/>
<rect x="738.70" y="257.60" width="13.47" height="13.55" fill="#332c2c"/>
<rect x="740.70" y="260.90" width="9.42" height="1.2" fill="#e0e0e0"/>
<rect x="752.12" y="257.60" width="13.47" height="13.55" fill="#cfcfcf"/>
<rect x="752.62" y="258.90" width="12.42" height="11.50" fill="#3a3a3a"/>
<path d="M754.12 261.60 l3 -1.2 l2 0.8 l3 -0.6 l1 3 l-2 3.2 l-3 0.6 l-3.5 -1 z" fill="#bdbdbd"/>
<rect x="756.12" y="262.10" width="2" height="1.5" fill="#f0f0f0"/><rect x="759.62" y="263.10" width="2.2" height="1.6" fill="#e8e8e8"/><rect x="755.12" y="265.10" width="1.5" height="1.2" fill="#666"/>
<rect x="754.12" y="268.10" width="9.42" height="1.4" fill="#000"/>
<rect x="765.54" y="257.60" width="13.47" height="13.55" fill="#891f30"/>
<rect x="778.96" y="257.60" width="13.47" height="13.55" fill="#cfcfcf"/>
<rect x="779.46" y="258.90" width="12.42" height="11.50" fill="#3a3a3a"/>
<path d="M780.96 261.60 l3 -1.2 l2 0.8 l3 -0.6 l1 3 l-2 3.2 l-3 0.6 l-3.5 -1 z" fill="#bdbdbd"/>
<rect x="782.96" y="262.10" width="2" height="1.5" fill="#f0f0f0"/><rect x="786.46" y="263.10" width="2.2" height="1.6" fill="#e8e8e8"/><rect x="781.96" y="265.10" width="1.5" height="1.2" fill="#666"/>
<rect x="780.96" y="268.10" width="9.42" height="1.4" fill="#000"/>
<rect x="792.38" y="257.60" width="13.47" height="13.55" fill="#332c2c"/>
<rect x="794.88" y="261.60" width="8.42" height="1" fill="#d0a0a0"/><rect x="798.38" y="263.10" width="2" height="2.5" fill="#e8e0e0"/>
<rect x="738.70" y="271.10" width="13.47" height="13.55" fill="#ffffff"/>
<ellipse cx="746.75" cy="272.72" rx="1.8" ry="0.8" fill="#222"/>
<ellipse cx="746.75" cy="279.47" rx="1.8" ry="0.8" fill="#222"/>
<rect x="752.12" y="271.10" width="13.47" height="13.55" fill="#9b9b9b"/>
<rect x="765.54" y="271.10" width="13.47" height="13.55" fill="#050505"/>
<ellipse cx="772.25" cy="277.85" rx="3" ry="3.5" fill="#5a2828"/>
<rect x="778.96" y="271.10" width="13.47" height="13.55" fill="#9b9b9b"/>
<rect x="792.38" y="271.10" width="13.47" height="13.55" fill="#ffffff"/>
<ellipse cx="800.43" cy="272.72" rx="1.8" ry="0.8" fill="#222"/>
<ellipse cx="800.43" cy="279.47" rx="1.8" ry="0.8" fill="#222"/>
<rect x="738.70" y="284.60" width="13.47" height="13.55" fill="#332c2c"/>
<text x="745.41" y="295.60" font-size="10.5" font-weight="bold" text-anchor="middle" fill="#e8dcc8" font-family="Liberation Sans" transform="translate(745.41 0) scale(0.85 1) translate(-745.41 0)">15</text>
<rect x="739.70" y="291.10" width="11.42" height="0.8" fill="#d04050"/>
<rect x="752.12" y="284.60" width="13.47" height="13.55" fill="#cfcfcf"/>
<rect x="752.62" y="285.90" width="12.42" height="11.50" fill="#3a3a3a"/>
<path d="M754.12 288.60 l3 -1.2 l2 0.8 l3 -0.6 l1 3 l-2 3.2 l-3 0.6 l-3.5 -1 z" fill="#bdbdbd"/>
<rect x="756.12" y="289.10" width="2" height="1.5" fill="#f0f0f0"/><rect x="759.62" y="290.10" width="2.2" height="1.6" fill="#e8e8e8"/><rect x="755.12" y="292.10" width="1.5" height="1.2" fill="#666"/>
<rect x="754.12" y="295.10" width="9.42" height="1.4" fill="#000"/>
<rect x="765.54" y="284.60" width="13.47" height="13.55" fill="#891f30"/>
<rect x="778.96" y="284.60" width="13.47" height="13.55" fill="#cfcfcf"/>
<rect x="779.46" y="285.90" width="12.42" height="11.50" fill="#3a3a3a"/>
<path d="M780.96 288.60 l3 -1.2 l2 0.8 l3 -0.6 l1 3 l-2 3.2 l-3 0.6 l-3.5 -1 z" fill="#bdbdbd"/>
<rect x="782.96" y="289.10" width="2" height="1.5" fill="#f0f0f0"/><rect x="786.46" y="290.10" width="2.2" height="1.6" fill="#e8e8e8"/><rect x="781.96" y="292.10" width="1.5" height="1.2" fill="#666"/>
<rect x="780.96" y="295.10" width="9.42" height="1.4" fill="#000"/>
<rect x="792.38" y="284.60" width="13.47" height="13.55" fill="#cfcfcf"/>
<rect x="792.88" y="285.90" width="12.42" height="11.50" fill="#3a3a3a"/>
<rect x="792.38" y="284.60" width="13.47" height="13.55" fill="#2c2828"/>
<path d="M795.38 289.60 l4 -1 l4 1.5 l0.5 3 l-3 1.5 l-5 -1.5 z" fill="#c8c4c0"/>
<rect x="794.38" y="295.10" width="9.42" height="1.4" fill="#000"/>
<rect x="738.70" y="298.10" width="13.47" height="13.55" fill="#ffffff"/>
<rect x="739.00" y="298.30" width="4.5" height="1.7" rx="0.6" fill="#0a0a0a"/>
<rect x="740.60" y="299.90" width="1.8" height="0.9" fill="#888"/>
<rect x="747.30" y="298.30" width="4.5" height="1.7" rx="0.6" fill="#0a0a0a"/>
<rect x="748.90" y="299.90" width="1.8" height="0.9" fill="#888"/>
<rect x="739.00" y="305.00" width="4.5" height="1.7" rx="0.6" fill="#0a0a0a"/>
<rect x="740.60" y="306.60" width="1.8" height="0.9" fill="#888"/>
<rect x="747.30" y="305.00" width="4.5" height="1.7" rx="0.6" fill="#0a0a0a"/>
<rect x="748.90" y="306.60" width="1.8" height="0.9" fill="#888"/>
<rect x="752.12" y="298.10" width="13.47" height="13.55" fill="#891f30"/>
<rect x="765.54" y="298.10" width="13.47" height="13.55" fill="#ffffff"/>
<rect x="765.84" y="298.30" width="4.5" height="1.7" rx="0.6" fill="#0a0a0a"/>
<rect x="767.44" y="299.90" width="1.8" height="0.9" fill="#888"/>
<rect x="774.14" y="298.30" width="4.5" height="1.7" rx="0.6" fill="#0a0a0a"/>
<rect x="775.74" y="299.90" width="1.8" height="0.9" fill="#888"/>
<rect x="765.84" y="305.00" width="4.5" height="1.7" rx="0.6" fill="#0a0a0a"/>
<rect x="767.44" y="306.60" width="1.8" height="0.9" fill="#888"/>
<rect x="774.14" y="305.00" width="4.5" height="1.7" rx="0.6" fill="#0a0a0a"/>
<rect x="775.74" y="306.60" width="1.8" height="0.9" fill="#888"/>
<rect x="778.96" y="298.10" width="13.47" height="13.55" fill="#891f30"/>
<rect x="792.38" y="298.10" width="13.47" height="13.55" fill="#ffffff"/>
<rect x="792.68" y="298.30" width="4.5" height="1.7" rx="0.6" fill="#0a0a0a"/>
<rect x="794.28" y="299.90" width="1.8" height="0.9" fill="#888"/>
<rect x="800.98" y="298.30" width="4.5" height="1.7" rx="0.6" fill="#0a0a0a"/>
<rect x="802.58" y="299.90" width="1.8" height="0.9" fill="#888"/>
<rect x="792.68" y="305.00" width="4.5" height="1.7" rx="0.6" fill="#0a0a0a"/>
<rect x="794.28" y="306.60" width="1.8" height="0.9" fill="#888"/>
<rect x="800.98" y="305.00" width="4.5" height="1.7" rx="0.6" fill="#0a0a0a"/>
<rect x="802.58" y="306.60" width="1.8" height="0.9" fill="#888"/>
<rect x="738.70" y="311.60" width="13.47" height="13.55" fill="#891f30"/>
<rect x="752.12" y="311.60" width="13.47" height="13.55" fill="#332c2c"/>
<rect x="753.92" y="315.60" width="9.82" height="5" fill="#9a9494"/><rect x="755.12" y="316.80" width="7.42" height="2.6" fill="#332c2c"/>
<rect x="765.54" y="311.60" width="13.47" height="13.55" fill="#9b9b9b"/>
<rect x="778.96" y="311.60" width="13.47" height="13.55" fill="#332c2c"/>
<rect x="778.96" y="311.60" width="13.47" height="13.55" fill="#1c1a1a"/>
<path d="M781.96 321.60 q-1 -6 3 -8" stroke="#d8c8a8" stroke-width="1" fill="none"/><path d="M783.96 318.60 l5 1 l0 3 l-5 0z" fill="#a02030"/><path d="M781.96 323.10 h7" stroke="#d8c8a8" stroke-width="0.6"/>
<rect x="792.38" y="311.60" width="13.47" height="13.55" fill="#891f30"/>
</g>
</svg>
<div class="a" style="left:0.00px;top:0.00px;width:1024.00px;height:12.30px;background:linear-gradient(#bbdcfd 0,#b8d9fb 85%,#c6e3ff 100%);"></div>
<div class="t" style="left:358.00px;top:3.00px;font-size:6.3px;line-height:6.30px;color:#1a1a1a;transform:scaleX(0.9986548291633037);transform-origin:0 0;">Autodesk AutoCAD 2018</div>
<div class="t" style="left:433.80px;top:3.00px;font-size:6.3px;line-height:6.30px;color:#1a1a1a;transform:scaleX(0.9758426416551206);transform-origin:0 0;">Sierra CSH Pattern.dwg</div>
<div class="a" style="left:21.00px;top:0.00px;width:115.00px;height:12.50px;background:linear-gradient(#7c7c7c 0,#6c6c6c 3px,#5a5a5a 8px,#4e4e4e 100%);"></div>
<div class="a" style="left:27.50px;top:4.20px;width:7.50px;height:5.20px;background:#f0f0f0;border-radius:0.5px"></div>
<svg class="a" style="left:39.00px;top:3.50px;" width="9" height="7" viewBox="0 0 9 7"><path d="M0.5 1.5h3l1 1h3v4h-7z" fill="#c9ccd2"/><path d="M1.5 6.5l1.5-3h6l-1.5 3z" fill="#e5e7ea"/></svg>
<svg class="a" style="left:52.50px;top:3.00px;" width="8" height="8" viewBox="0 0 8 8"><rect x="0.5" y="0.5" width="7" height="7" fill="#3b4a66"/><rect x="1.8" y="1" width="4.4" height="2.4" fill="#f2f2f2"/><rect x="1.8" y="4.6" width="4.4" height="2.5" fill="#e8e8e8"/></svg>
<svg class="a" style="left:65.00px;top:3.00px;" width="9" height="8" viewBox="0 0 9 8"><rect x="0.5" y="0.5" width="7" height="7" fill="#3b4a66"/><rect x="1.8" y="1" width="4.4" height="2.4" fill="#f2f2f2"/><rect x="1.8" y="4.6" width="4.4" height="2.5" fill="#e8e8e8"/><path d="M5 5 L8.5 1.2" stroke="#e9a01a" stroke-width="1.3"/></svg>
<svg class="a" style="left:77.50px;top:3.00px;" width="9" height="8" viewBox="0 0 9 8"><rect x="2" y="0.5" width="5" height="2.5" fill="#e8e8e8"/><rect x="0.5" y="2.8" width="8" height="3.5" rx="0.8" fill="#d8dade"/><rect x="2" y="5.5" width="5" height="2.2" fill="#8fb3d9"/></svg>
<svg class="a" style="left:90.50px;top:3.50px;" width="9" height="6" viewBox="0 0 9 6"><path d="M1 2.5 L3.5 0.5 L3.5 1.8 Q7.5 1.6 8 5.5 Q6.5 3.4 3.5 3.4 L3.5 4.6Z" fill="#d9dce0"/></svg>
<svg class="a" style="left:101.40px;top:4.20px;" width="6" height="4" viewBox="0 0 6 4"><path d="M1.70 1.35 L4.30 1.35 L3 2.95Z" fill="#c8c8c8"/></svg>
<svg class="a" style="left:110.50px;top:3.50px;" width="9" height="6" viewBox="0 0 9 6"><path d="M8 2.5 L5.5 0.5 L5.5 1.8 Q1.5 1.6 1 5.5 Q2.5 3.4 5.5 3.4 L5.5 4.6Z" fill="#767676"/></svg>
<svg class="a" style="left:120.00px;top:4.20px;" width="6" height="4" viewBox="0 0 6 4"><path d="M1.70 1.35 L4.30 1.35 L3 2.95Z" fill="#c8c8c8"/></svg>
<div class="a" style="left:129.50px;top:4.20px;width:4.00px;height:0.90px;background:#d8d8d8;"></div>
<svg class="a" style="left:128.50px;top:5.00px;" width="6" height="4" viewBox="0 0 6 4"><path d="M1.20 1.10 L4.80 1.10 L3 3.20Z" fill="#e0e0e0"/></svg>
<div class="a" style="left:721.00px;top:0.00px;width:238.00px;height:12.30px;background:linear-gradient(#7c7c7c 0,#6c6c6c 3px,#5a5a5a 8px,#4e4e4e 100%);"></div>
<div class="a" style="left:721.00px;top:0.00px;width:7.00px;height:12.30px;background:linear-gradient(#808080,#5a5a5a 50%,#4e4e4e);"></div>
<svg class="a" style="left:722.00px;top:2.00px;" width="5" height="8" viewBox="0 0 5 8"><path d="M1.8 1.8 L4.2 4 L1.8 6.2Z" fill="#eee"/></svg>
<div class="a" style="left:728.20px;top:1.00px;width:95.20px;height:10.70px;background:linear-gradient(#6a6a6a,#727272);border:0.6px solid #4a4a4a"></div>
<div class="t" style="left:730.20px;top:4.00px;font-size:6.3px;line-height:6.30px;color:#b8b8b8;transform:scaleX(0.8844493676489323);transform-origin:0 0;font-style:italic;">Type a keyword or phrase</div>
<svg class="a" style="left:825.50px;top:2.50px;" width="10" height="8" viewBox="0 0 10 8"><rect x="0.8" y="1" width="3" height="6.2" rx="1" fill="#e8e8e8"/><rect x="5.2" y="1" width="3" height="6.2" rx="1" fill="#e8e8e8"/><rect x="1.6" y="3.5" width="1.4" height="3" fill="#555"/><rect x="6" y="3.5" width="1.4" height="3" fill="#555"/></svg>
<svg class="a" style="left:839.50px;top:1.50px;" width="9" height="10" viewBox="0 0 9 10"><circle cx="4.5" cy="3" r="2.3" fill="#3d7fd8"/><path d="M0.5 9.5 Q0.8 5.6 4.5 5.6 Q8.2 5.6 8.5 9.5Z" fill="#3d7fd8"/></svg>
<div class="t" style="left:850.00px;top:4.00px;font-size:6.5px;line-height:6.50px;color:#e4e4e4;transform:scaleX(1.036714690680962);transform-origin:0 0;">hewetth</div>
<svg class="a" style="left:893.50px;top:4.60px;" width="6" height="4" viewBox="0 0 6 4"><path d="M1.90 1.45 L4.10 1.45 L3 2.85Z" fill="#cfcfcf"/></svg>
<svg class="a" style="left:906.00px;top:2.00px;" width="9" height="9" viewBox="0 0 9 9"><path d="M0.5 1.5h1.5l1 4.5h4.5l1-3h-5.5" stroke="#8fa6c9" stroke-width="1" fill="none"/><circle cx="3.5" cy="7.8" r="0.9" fill="#8fa6c9"/><circle cx="6.8" cy="7.8" r="0.9" fill="#8fa6c9"/></svg>
<svg class="a" style="left:916.00px;top:1.50px;" width="10" height="9" viewBox="0 0 10 9"><path d="M5 1.2 L9 8 L1 8Z" stroke="#9fb0d0" stroke-width="1.1" fill="none"/><circle cx="5" cy="1.5" r="1.2" fill="#9fb0d0"/><circle cx="1.3" cy="7.9" r="1.2" fill="#9fb0d0"/><circle cx="8.7" cy="7.9" r="1.2" fill="#9fb0d0"/></svg>
<svg class="a" style="left:926.50px;top:4.60px;" width="6" height="4" viewBox="0 0 6 4"><path d="M1.90 1.45 L4.10 1.45 L3 2.85Z" fill="#cfcfcf"/></svg>
<div class="a" style="left:936.50px;top:1.50px;width:0.60px;height:9.00px;background:#5a5a5a;"></div>
<svg class="a" style="left:940.50px;top:1.50px;" width="9" height="9" viewBox="0 0 9 9"><circle cx="4.5" cy="4.5" r="4" fill="#f4f4f4"/><text x="4.5" y="7.2" font-size="7" font-weight="bold" text-anchor="middle" fill="#2857b8" font-family="Liberation Sans">?</text></svg>
<svg class="a" style="left:952.00px;top:4.60px;" width="6" height="4" viewBox="0 0 6 4"><path d="M1.90 1.45 L4.10 1.45 L3 2.85Z" fill="#cfcfcf"/></svg>
<div class="a" style="left:959.00px;top:0.00px;width:65.00px;height:12.30px;background:linear-gradient(#bbdcfd 0,#b8d9fb 85%,#c6e3ff 100%);"></div>
<div class="a" style="left:967.70px;top:0.00px;width:15.00px;height:9.50px;background:linear-gradient(#eef3f9 0,#e2e9f2 45%,#bccbdd 55%,#c8d5e5 100%);border:0.6px solid #8797ad;border-top:none;border-radius:0 0 0 2.5px"></div>
<div class="a" style="left:972.20px;top:4.00px;width:6.60px;height:2.80px;background:#f4f4f4;border:0.7px solid #505a68;border-radius:0.5px"></div>
<div class="a" style="left:982.70px;top:0.00px;width:14.00px;height:9.50px;background:linear-gradient(#eef3f9 0,#e2e9f2 45%,#bccbdd 55%,#c8d5e5 100%);border:0.6px solid #8797ad;border-top:none"></div>
<svg class="a" style="left:986.00px;top:1.00px;" width="8" height="8" viewBox="0 0 8 8"><path d="M2.5 2 h4 v4" stroke="#5a6472" stroke-width="1" fill="none"/><rect x="1.2" y="3.2" width="4.2" height="4.2" fill="#e8ecf0" stroke="#5a6472" stroke-width="1"/><rect x="2.6" y="4.6" width="1.4" height="1.4" fill="#5a6472"/></svg>
<div class="a" style="left:996.70px;top:0.00px;width:26.00px;height:9.50px;background:linear-gradient(#f0b4a6 0,#e69a88 45%,#cc4a30 55%,#d9694e 100%);border:0.6px solid #8a4a40;border-top:none;border-radius:0 0 2.5px 0"></div>
<svg class="a" style="left:1005.00px;top:1.00px;" width="9" height="8" viewBox="0 0 9 8"><path d="M1.5 1 L7.5 7 M7.5 1 L1.5 7" stroke="#6a3a34" stroke-width="2.3"/><path d="M1.5 1 L7.5 7 M7.5 1 L1.5 7" stroke="#fbfbfb" stroke-width="1.3"/></svg>
<div class="a" style="left:0.00px;top:12.30px;width:1024.00px;height:1.50px;background:#474747;"></div>
<div class="a" style="left:0.00px;top:13.80px;width:1024.00px;height:9.10px;background:#565656;"></div>
<div class="a" style="left:0.00px;top:22.90px;width:1024.00px;height:0.90px;background:#464646;"></div>
<div class="a" style="left:25.00px;top:14.90px;width:26.00px;height:9.20px;background:#5a5a5a;border:0.8px solid #3c3c3c;border-bottom:none"></div>
<div class="t" style="left:29.50px;top:16.00px;font-size:6.35px;line-height:6.35px;color:#f0f0f0;transform:scaleX(1.06862630689704);transform-origin:0 0;">Home</div>
<div class="t" style="left:57.50px;top:16.00px;font-size:6.35px;line-height:6.35px;color:#d6d6d6;transform:scaleX(1.0138563982220123);transform-origin:0 0;">Insert</div>
<div class="t" style="left:83.75px;top:16.00px;font-size:6.35px;line-height:6.35px;color:#d6d6d6;transform:scaleX(1.0562614099467076);transform-origin:0 0;">Annotate</div>
<div class="t" style="left:120.50px;top:16.00px;font-size:6.35px;line-height:6.35px;color:#d6d6d6;transform:scaleX(1.004974736928368);transform-origin:0 0;">Parametric</div>
<div class="t" style="left:161.25px;top:16.00px;font-size:6.35px;line-height:6.35px;color:#d6d6d6;transform:scaleX(1.0330781929374269);transform-origin:0 0;">View</div>
<div class="t" style="left:185.50px;top:16.00px;font-size:6.35px;line-height:6.35px;color:#d6d6d6;transform:scaleX(1.0394272799269462);transform-origin:0 0;">Manage</div>
<div class="t" style="left:219.25px;top:16.00px;font-size:6.35px;line-height:6.35px;color:#d6d6d6;transform:scaleX(1.093861497493439);transform-origin:0 0;">Output</div>
<div class="t" style="left:250.50px;top:16.00px;font-size:6.35px;line-height:6.35px;color:#d6d6d6;transform:scaleX(1.0497236165678379);transform-origin:0 0;">Add-ins</div>
<div class="t" style="left:283.00px;top:16.00px;font-size:6.35px;line-height:6.35px;color:#d6d6d6;transform:scaleX(0.9845417255400281);transform-origin:0 0;">A360</div>
<div class="t" style="left:307.50px;top:16.00px;font-size:6.35px;line-height:6.35px;color:#d6d6d6;transform:scaleX(0.9667673716012086);transform-origin:0 0;">Express Tools</div>
<div class="t" style="left:355.75px;top:16.00px;font-size:6.35px;line-height:6.35px;color:#d6d6d6;transform:scaleX(0.9951620912250834);transform-origin:0 0;">Featured Apps</div>
<svg class="a" style="left:411.00px;top:15.50px;" width="16" height="6" viewBox="0 0 16 6"><rect x="1.5" y="0.8" width="7" height="4" rx="0.6" fill="#e8e8e8"/><rect x="3" y="2" width="4" height="1.6" fill="#4f4f4f"/><path d="M11 2.3h3l-1.5 1.7z" fill="#ddd"/></svg>
<div class="a" style="left:0.00px;top:23.80px;width:1024.00px;height:52.20px;background:linear-gradient(#4c4c4c,#3f3f3f);"></div>
<div class="a" style="left:0.00px;top:23.80px;width:120.80px;height:52.00px;background:#5a5a5a;border-right:0.8px solid #444"></div>
<div class="a" style="left:0.00px;top:65.50px;width:120.00px;height:10.30px;background:linear-gradient(#545454,#4c4c4c);"></div>
<div class="a" style="left:120.80px;top:23.80px;width:132.70px;height:52.00px;background:#5a5a5a;border-right:0.8px solid #444"></div>
<div class="a" style="left:120.80px;top:65.50px;width:131.90px;height:10.30px;background:linear-gradient(#545454,#4c4c4c);"></div>
<div class="a" style="left:253.50px;top:23.80px;width:101.50px;height:52.00px;background:#5a5a5a;border-right:0.8px solid #444"></div>
<div class="a" style="left:253.50px;top:65.50px;width:100.70px;height:10.30px;background:linear-gradient(#545454,#4c4c4c);"></div>
<div class="a" style="left:355.00px;top:23.80px;width:145.30px;height:52.00px;background:#5a5a5a;border-right:0.8px solid #444"></div>
<div class="a" style="left:355.00px;top:65.50px;width:144.50px;height:10.30px;background:linear-gradient(#545454,#4c4c4c);"></div>
<div class="a" style="left:500.30px;top:23.80px;width:86.10px;height:52.00px;background:#5a5a5a;border-right:0.8px solid #444"></div>
<div class="a" style="left:500.30px;top:65.50px;width:85.30px;height:10.30px;background:linear-gradient(#545454,#4c4c4c);"></div>
<div class="a" style="left:586.40px;top:23.80px;width:141.30px;height:52.00px;background:#5a5a5a;border-right:0.8px solid #444"></div>
<div class="a" style="left:586.40px;top:65.50px;width:140.50px;height:10.30px;background:linear-gradient(#545454,#4c4c4c);"></div>
<div class="a" style="left:727.70px;top:23.80px;width:36.90px;height:52.00px;background:#5a5a5a;border-right:0.8px solid #444"></div>
<div class="a" style="left:727.70px;top:65.50px;width:36.10px;height:10.30px;background:linear-gradient(#545454,#4c4c4c);"></div>
<div class="a" style="left:764.60px;top:23.80px;width:51.70px;height:52.00px;background:#5a5a5a;border-right:0.8px solid #444"></div>
<div class="a" style="left:764.60px;top:65.50px;width:50.90px;height:10.30px;background:linear-gradient(#545454,#4c4c4c);"></div>
<div class="a" style="left:816.30px;top:23.80px;width:42.10px;height:52.00px;background:#5a5a5a;border-right:0.8px solid #444"></div>
<div class="a" style="left:816.30px;top:65.50px;width:41.30px;height:10.30px;background:linear-gradient(#545454,#4c4c4c);"></div>
<div class="a" style="left:858.40px;top:23.80px;width:33.60px;height:52.00px;background:#5a5a5a;border-right:0.8px solid #444"></div>
<div class="a" style="left:858.40px;top:65.50px;width:32.80px;height:10.30px;background:linear-gradient(#545454,#4c4c4c);"></div>
<div class="a" style="left:0.00px;top:75.90px;width:1024.00px;height:1.20px;background:#5e5e5e;"></div>
<div class="a" style="left:0.00px;top:0.00px;width:22.00px;height:22.00px;background:#2e2e2e;"></div>
<div class="a" style="left:1.00px;top:1.00px;width:20.00px;height:20.00px;background:linear-gradient(#d2d2d2,#a9a9a9);"></div>
<svg class="a" style="left:0.00px;top:0.00px;" width="22" height="22" viewBox="0 0 22 22"><defs><linearGradient id="lg" x1="0" y1="0" x2="1" y2="1"><stop offset="0" stop-color="#e8343a"/><stop offset="1" stop-color="#b3141c"/></linearGradient></defs><path d="M3 15.6 L7.6 2.2 L10.6 2.2 L15.2 15.6 L12.3 15.6 L11.3 12.4 L6.9 12.4 L5.9 15.6Z M7.6 10 L10.6 10 L9.1 5.3Z" fill="url(#lg)" fill-rule="evenodd"/></svg>
<svg class="a" style="left:15.40px;top:8.60px;" width="6" height="4" viewBox="0 0 6 4"><path d="M1.70 1.35 L4.30 1.35 L3 2.95Z" fill="#333"/></svg>
<div class="a" style="left:2.90px;top:26.50px;width:19.30px;height:37.60px;background:linear-gradient(#7a7a7a,#636363);border:0.7px solid #404040"></div>
<svg class="a" style="left:0.00px;top:24.00px;" width="60" height="42" viewBox="0 0 60 42"><path d="M5.1 18.6 L18.8 5.5" stroke="#d0d0d0" stroke-width="0.8"/><circle cx="5.1" cy="18.6" r="1.3" fill="#4f83cc"/><circle cx="18.8" cy="5.5" r="1.3" fill="#4f83cc"/><path d="M28.4 16.4 L36.8 16.4 A4.55 4.55 0 0 0 36.8 7.3" stroke="#d0d0d0" stroke-width="0.8" fill="none"/><circle cx="28.4" cy="16.4" r="1.3" fill="#4f83cc"/><circle cx="36.8" cy="16.4" r="1.3" fill="#4f83cc"/><circle cx="36.8" cy="7.3" r="1.3" fill="#4f83cc"/></svg>
<div class="t" style="left:6.60px;top:48.00px;font-size:6.9px;line-height:6.90px;color:#eaeaea;transform:scaleX(0.9352791163720561);transform-origin:0 0;">Line</div>
<div class="t" style="left:24.10px;top:48.00px;font-size:6.9px;line-height:6.90px;color:#eaeaea;transform:scaleX(0.9435938821594021);transform-origin:0 0;">Polyline</div>
<svg class="a" style="left:50.00px;top:24.00px;" width="70" height="42" viewBox="0 0 70 42"><defs><linearGradient id="cg" x1="0" y1="0" x2="0" y2="1"><stop offset="0" stop-color="#fbfbfd"/><stop offset="1" stop-color="#c4c7d6"/></linearGradient><linearGradient id="rg" x1="0" y1="0" x2="0" y2="1"><stop offset="0" stop-color="#f4f4f6"/><stop offset="1" stop-color="#b9bccb"/></linearGradient></defs><circle cx="11.7" cy="11.7" r="8" fill="#3a3a3a" opacity="0.6"/><circle cx="11.7" cy="11.7" r="7.5" fill="url(#cg)"/><path d="M11.7 11.7 L16.8 6.5" stroke="#6aa0e8" stroke-width="0.9"/><circle cx="11.7" cy="11.7" r="0.9" fill="#8ab6ee"/><path d="M29.2 18.6 Q30.5 8 43.4 4.7" stroke="#c8c8c8" stroke-width="0.8" fill="none"/><circle cx="29.2" cy="18.6" r="1.3" fill="#4f83cc"/><circle cx="33.7" cy="9.5" r="1.3" fill="#4f83cc"/><circle cx="43.4" cy="4.7" r="1.3" fill="#4f83cc"/><rect x="51" y="6.2" width="6.3" height="4.8" rx="0.8" fill="url(#rg)"/><circle cx="50.4" cy="11" r="1.0" fill="#4f83cc"/><circle cx="57.6" cy="5.8" r="1.0" fill="#4f83cc"/><ellipse cx="53.6" cy="21.5" rx="3.7" ry="2.2" fill="#e6e7ec"/><circle cx="53.6" cy="21.5" r="1" fill="#333"/><circle cx="53.7" cy="19.1" r="0.9" fill="#4f83cc"/><circle cx="57.4" cy="21" r="0.9" fill="#4f83cc"/><rect x="50.6" y="30.6" width="7" height="7" fill="none" stroke="#c8c8c8" stroke-width="0.6" stroke-dasharray="1 1"/><rect x="51.6" y="31.6" width="5" height="5" fill="#a8c4ee"/><circle cx="57.3" cy="36.5" r="0.9" fill="#4f83cc"/></svg>
<div class="t" style="left:54.00px;top:48.00px;font-size:6.9px;line-height:6.90px;color:#eaeaea;transform:scaleX(0.9413732849887113);transform-origin:0 0;">Circle</div>
<div class="t" style="left:81.70px;top:48.00px;font-size:6.9px;line-height:6.90px;color:#eaeaea;transform:scaleX(0.9758454106280191);transform-origin:0 0;">Arc</div>
<svg class="a" style="left:58.50px;top:55.00px;" width="6" height="4" viewBox="0 0 6 4"><path d="M1.50 1.25 L4.50 1.25 L3 3.05Z" fill="#e0e0e0"/></svg>
<svg class="a" style="left:83.00px;top:55.00px;" width="6" height="4" viewBox="0 0 6 4"><path d="M1.50 1.25 L4.50 1.25 L3 3.05Z" fill="#e0e0e0"/></svg>
<svg class="a" style="left:110.50px;top:30.50px;" width="6" height="4" viewBox="0 0 6 4"><path d="M1.60 1.30 L4.40 1.30 L3 3.00Z" fill="#e0e0e0"/></svg>
<svg class="a" style="left:110.50px;top:43.50px;" width="6" height="4" viewBox="0 0 6 4"><path d="M1.60 1.30 L4.40 1.30 L3 3.00Z" fill="#e0e0e0"/></svg>
<svg class="a" style="left:110.50px;top:56.20px;" width="6" height="4" viewBox="0 0 6 4"><path d="M1.60 1.30 L4.40 1.30 L3 3.00Z" fill="#e0e0e0"/></svg>
<div class="t" style="left:49.50px;top:68.00px;font-size:6.9px;line-height:6.90px;color:#dadada;transform:scaleX(0.937846330618004);transform-origin:0 0;">Draw</div>
<svg class="a" style="left:66.20px;top:68.50px;" width="6" height="4" viewBox="0 0 6 4"><path d="M1.00 1.00 L5.00 1.00 L3 3.30Z" fill="#ececec"/></svg>
<svg class="a" style="left:120.00px;top:26.00px;" width="140" height="40" viewBox="0 0 140 40"><path d="M4 6.6h9 M8.5 2v9.2" stroke="#f0f0f0" stroke-width="1"/><path d="M8.5 1.3l-1.6 1.8h3.2z M8.5 11.9l-1.6-1.8h3.2z M3.3 6.6l1.8-1.6v3.2z M13.7 6.6l-1.8-1.6v3.2z" fill="#f0f0f0"/><circle cx="8.5" cy="6.6" r="1.6" fill="#5b8fd6"/><circle cx="6.3" cy="16.5" r="2.3" fill="#e4e4e4"/><circle cx="9.8" cy="20.8" r="2.6" fill="#9fc0ea"/><path d="M10 14.5 Q11.8 15.5 11.5 17.5" stroke="#ddd" stroke-width="0.6" fill="none"/><path d="M4.8 28.5 h4.5 l3.3 7.8 h-7.8z" fill="#f0f0f0"/><path d="M9.3 28.5 l3.3 7.8 h-2.4z" fill="#7fa8dc"/><rect x="7" y="32.8" width="2.2" height="2.2" fill="#222"/><circle cx="46.7" cy="6.6" r="3.6" stroke="#e6e6e6" stroke-width="1" fill="none"/><path d="M45.3 1.8 l3.2 0.8 -2 2z" fill="#4f83cc"/><path d="M46.5 15 L43 23.3 L46.5 22.5z" fill="#cfd2d8"/><path d="M46.9 15 L50.6 23.3 L46.9 22.5z" fill="#8fb4e6"/><path d="M46.7 14.5 v9.3" stroke="#888" stroke-width="0.5"/><rect x="43" y="28.3" width="8" height="8" fill="#86acd9"/><rect x="43" y="28.3" width="8" height="1.2" fill="#eef2f8"/><rect x="43" y="32" width="4.6" height="4.3" fill="#f2f2f2"/><path d="M79.5 7.5 l9 -1.6" stroke="#5b8fd6" stroke-width="0.9"/><path d="M82.2 10.5 l2.8 -7.5" stroke="#d8d8d8" stroke-width="0.8"/><path d="M80 24 v-3.5 q0 -3.5 3.5 -3.5 h4.5 v7z" fill="#e8e8e8"/><path d="M79.5 20.5 q0.2 -4.5 4.5 -4.5" stroke="#5b8fd6" stroke-width="1" fill="none"/><rect x="79.6" y="28.2" width="3.4" height="3.4" fill="#8fb6ea"/><rect x="84.6" y="28.2" width="3.4" height="3.4" fill="#8fb6ea"/><rect x="79.6" y="33.2" width="3.4" height="3.4" fill="#8fb6ea"/><rect x="84.6" y="33.2" width="3.4" height="3.4" fill="#8fb6ea"/><path d="M121 9.5 l6 -6.5" stroke="#e9a01a" stroke-width="1.6"/><circle cx="121.3" cy="9.2" r="1.3" fill="#d23a2a"/><path d="M118.5 11.8 h9" stroke="#ccc" stroke-width="0.6"/><rect x="119" y="18.5" width="8" height="5" rx="1" fill="#9cbde6"/><rect x="121" y="16.2" width="6" height="3" rx="1" fill="#c6d8f0"/><path d="M119 36 h9 v-2.5 h-2 l-2.5 -5.5 l-2.5 5.5 h-2z" fill="none" stroke="#7fa8dc" stroke-width="1"/></svg>
<div class="t" style="left:135.50px;top:30.00px;font-size:6.9px;line-height:6.90px;color:#eaeaea;transform:scaleX(1.0016846008588778);transform-origin:0 0;">Move</div>
<div class="t" style="left:135.50px;top:42.00px;font-size:6.9px;line-height:6.90px;color:#eaeaea;transform:scaleX(0.9623033195584269);transform-origin:0 0;">Copy</div>
<div class="t" style="left:135.50px;top:55.00px;font-size:6.9px;line-height:6.90px;color:#eaeaea;transform:scaleX(0.937875740042576);transform-origin:0 0;">Stretch</div>
<div class="t" style="left:173.80px;top:30.00px;font-size:6.9px;line-height:6.90px;color:#eaeaea;transform:scaleX(0.93466923393249);transform-origin:0 0;">Rotate</div>
<div class="t" style="left:173.80px;top:42.00px;font-size:6.9px;line-height:6.90px;color:#eaeaea;transform:scaleX(1.016097757765834);transform-origin:0 0;">Mirror</div>
<div class="t" style="left:173.80px;top:55.00px;font-size:6.9px;line-height:6.90px;color:#eaeaea;transform:scaleX(0.8806640467635505);transform-origin:0 0;">Scale</div>
<div class="t" style="left:211.00px;top:30.00px;font-size:6.9px;line-height:6.90px;color:#eaeaea;transform:scaleX(1.0268201356473723);transform-origin:0 0;">Trim</div>
<div class="t" style="left:211.00px;top:42.00px;font-size:6.9px;line-height:6.90px;color:#eaeaea;transform:scaleX(0.933577024394848);transform-origin:0 0;">Fillet</div>
<div class="t" style="left:211.00px;top:55.00px;font-size:6.9px;line-height:6.90px;color:#eaeaea;transform:scaleX(0.9160102747841252);transform-origin:0 0;">Array</div>
<svg class="a" style="left:228.50px;top:30.90px;" width="6" height="4" viewBox="0 0 6 4"><path d="M1.60 1.30 L4.40 1.30 L3 3.00Z" fill="#e0e0e0"/></svg>
<svg class="a" style="left:228.50px;top:43.60px;" width="6" height="4" viewBox="0 0 6 4"><path d="M1.60 1.30 L4.40 1.30 L3 3.00Z" fill="#e0e0e0"/></svg>
<svg class="a" style="left:228.50px;top:56.40px;" width="6" height="4" viewBox="0 0 6 4"><path d="M1.60 1.30 L4.40 1.30 L3 3.00Z" fill="#e0e0e0"/></svg>
<div class="t" style="left:173.00px;top:68.00px;font-size:6.9px;line-height:6.90px;color:#dadada;transform:scaleX(1.0432260658890142);transform-origin:0 0;">Modify</div>
<svg class="a" style="left:196.30px;top:68.50px;" width="6" height="4" viewBox="0 0 6 4"><path d="M1.00 1.00 L5.00 1.00 L3 3.30Z" fill="#ececec"/></svg>
<svg class="a" style="left:255.00px;top:24.00px;" width="24" height="24" viewBox="0 0 24 24"><path d="M5.6 19.2 L11.75 4.9 L17.9 19.2 M7.9 13.9 H15.6" stroke="#ececec" stroke-width="1.5" fill="none" stroke-linejoin="miter"/></svg>
<svg class="a" style="left:286.00px;top:27.00px;" width="18" height="18" viewBox="0 0 18 18"><path d="M1.5 0.5 v16 M16 0.5 v16" stroke="#c0c0c0" stroke-width="0.6"/><path d="M2 2.8 h13.5" stroke="#5b8fd6" stroke-width="0.8"/><path d="M2 2.8 l1.6 -1 v2z M15.5 2.8 l-1.6 -1 v2z" fill="#5b8fd6"/><path d="M4.5 13.5 l2-2 M8.8 10 v-2 M13 13.5 l-2 -2 M6 11 l1 -1 M11.5 11 l-1 -1" stroke="#e8a020" stroke-width="1.3"/></svg>
<div class="t" style="left:261.00px;top:48.00px;font-size:6.9px;line-height:6.90px;color:#eaeaea;transform:scaleX(0.9720282569799703);transform-origin:0 0;">Text</div>
<svg class="a" style="left:263.50px;top:55.00px;" width="6" height="4" viewBox="0 0 6 4"><path d="M1.50 1.25 L4.50 1.25 L3 3.05Z" fill="#e0e0e0"/></svg>
<div class="t" style="left:280.00px;top:48.00px;font-size:6.9px;line-height:6.90px;color:#eaeaea;transform:scaleX(0.9387956436890874);transform-origin:0 0;">Dimension</div>
<svg class="a" style="left:313.00px;top:28.00px;" width="12" height="34" viewBox="0 0 12 34"><path d="M1.8 0.5 v8 M10.8 0.5 v8" stroke="#a8a8a8" stroke-width="0.8"/><path d="M2.5 3 h7.6" stroke="#5b8fd6" stroke-width="0.8"/><path d="M2.4 3 l1.6 -1.1 v2.2z M10.2 3 l-1.6 -1.1 v2.2z" fill="#5b8fd6"/><path d="M2 21.5 q1.5 -1 2 -3 q0.5 -2 3 -2.5" stroke="#ddd" stroke-width="0.8" fill="none"/><circle cx="2" cy="21.5" r="0.8" fill="#ddd"/><path d="M7.5 16.5h4 M9.5 14.5v4" stroke="#eee" stroke-width="1"/><rect x="1.5" y="26.5" width="8" height="7" fill="#e6e6e6"/><path d="M1.5 28.8h8 M1.5 31h8 M4.2 28v5.5 M6.8 28v5.5" stroke="#aaa" stroke-width="0.5"/></svg>
<div class="t" style="left:325.80px;top:30.00px;font-size:6.9px;line-height:6.90px;color:#eaeaea;transform:scaleX(0.9281097828734742);transform-origin:0 0;">Linear</div>
<svg class="a" style="left:345.60px;top:31.20px;" width="6" height="4" viewBox="0 0 6 4"><path d="M1.60 1.30 L4.40 1.30 L3 3.00Z" fill="#e0e0e0"/></svg>
<div class="t" style="left:325.80px;top:42.00px;font-size:6.9px;line-height:6.90px;color:#eaeaea;transform:scaleX(0.8937416266272165);transform-origin:0 0;">Leader</div>
<svg class="a" style="left:347.20px;top:43.90px;" width="6" height="4" viewBox="0 0 6 4"><path d="M1.60 1.30 L4.40 1.30 L3 3.00Z" fill="#e0e0e0"/></svg>
<div class="t" style="left:326.00px;top:55.00px;font-size:6.9px;line-height:6.90px;color:#eaeaea;transform:scaleX(0.9457850328381792);transform-origin:0 0;">Table</div>
<div class="t" style="left:284.40px;top:68.00px;font-size:6.9px;line-height:6.90px;color:#dadada;transform:scaleX(0.9729718977640686);transform-origin:0 0;">Annotation</div>
<svg class="a" style="left:318.70px;top:68.50px;" width="6" height="4" viewBox="0 0 6 4"><path d="M1.00 1.00 L5.00 1.00 L3 3.30Z" fill="#ececec"/></svg>
<svg class="a" style="left:363.00px;top:27.00px;" width="20" height="17" viewBox="0 0 20 17"><path d="M1.5 4 l5 -2.5 h7 l-5 2.5z" fill="#f2f2f2"/><path d="M1.5 6.7 l5 -2.5 h7 l-5 2.5z" fill="#e0e0e0"/><path d="M1.5 9.4 l5 -2.5 h7 l-5 2.5z" fill="#f2f2f2"/><path d="M1.5 12.1 l5 -2.5 h7 l-5 2.5z" fill="#d8d8d8"/><rect x="10" y="8" width="6.5" height="8.5" fill="#fafafa" stroke="#555" stroke-width="0.4"/><rect x="11" y="9" width="4" height="1.5" fill="#3f7fd0"/><path d="M11 12h4.5 M11 13.5h4.5 M11 15h4.5" stroke="#777" stroke-width="0.5"/></svg>
<div class="t" style="left:364.80px;top:48.00px;font-size:6.9px;line-height:6.90px;color:#eaeaea;transform:scaleX(0.9038958781478824);transform-origin:0 0;">Layer</div>
<div class="t" style="left:357.80px;top:56.00px;font-size:6.9px;line-height:6.90px;color:#eaeaea;transform:scaleX(0.9095051336059264);transform-origin:0 0;">Properties</div>
<div class="a" style="left:388.50px;top:26.80px;width:110.00px;height:11.40px;background:linear-gradient(#5a5a5a,#474747);border:0.5px solid #3a3a3a;border-left:1px solid #333;border-radius:1.5px"></div>
<svg class="a" style="left:388.00px;top:24.00px;" width="112" height="40" viewBox="0 0 112 40"><path d="M6.5 3.8 a3 3 0 0 1 3 3 q0 1.6 -1.2 2.8 v1.6 h-3.6 v-1.6 q-1.2 -1.2 -1.2 -2.8 a3 3 0 0 1 3 -3z" fill="#f4e69a"/><rect x="5.5" y="11.3" width="2" height="1.2" fill="#ccc"/><circle cx="16.5" cy="8" r="2.6" fill="#f6e8a0"/><path d="M16.5 3.5v9 M12 8h9 M13.3 4.8l6.4 6.4 M19.7 4.8l-6.4 6.4" stroke="#e8dca0" stroke-width="0.5" opacity="0.8"/><rect x="23.2" y="8.7" width="5.2" height="3.8" fill="#eed890"/><rect x="25.3" y="9.8" width="0.9" height="1.6" fill="#555"/><path d="M27.5 8.7 v-2.5 q1.4 -1.6 2.9 0" stroke="#d8d8d8" stroke-width="0.6" fill="none"/><rect x="33.7" y="5.6" width="8" height="6.9" rx="0.4" fill="#fcfcfc" stroke="#2a2a2a" stroke-width="0.7"/></svg>
<svg class="a" style="left:0.00px;top:0.00px;" width="500" height="70" viewBox="0 0 500 70"><path d="M391.5 44.6 l2 -1.6 h4.5 l-2 1.6z" fill="#f0f0f0"/><circle cx="397.6" cy="46.3" r="1.7" fill="#9cc8f4"/><rect x="397" y="48" width="1.2" height="1" fill="#ccc"/><path d="M404.5 43.1 l2 -1.6 h4.5 l-2 1.6z" fill="#f0f0f0"/><path d="M404.5 44.9 l2 -1.6 h4.5 l-2 1.6z" fill="#d8d8d8"/><path d="M404.5 46.7 l2 -1.6 h4.5 l-2 1.6z" fill="#f4f4f4"/><path d="M404.5 48.5 l2 -1.6 h4.5 l-2 1.6z" fill="#cfcfcf"/><path d="M403.5 47.5 l2 -1.3 h4 l-2 1.3z" fill="#4a80d0"/><path d="M409 49.5 l1.5 -1.5" stroke="#bbb" stroke-width="0.6"/><path d="M417 44.6 l2 -1.6 h4.5 l-2 1.6z" fill="#f0f0f0"/><circle cx="421.5" cy="46.8" r="1.9" fill="#7aa8e0"/><circle cx="421.5" cy="46.8" r="0.7" fill="#dbe8f8"/><path d="M430 44.6 l2 -1.6 h4.5 l-2 1.6z" fill="#f0f0f0"/><rect x="434" y="45" width="2.2" height="3.6" rx="0.5" fill="#8ec0b8"/><path d="M442.5 45 h6 v3.8 h-6z" fill="#c8c8c8"/><path d="M442.5 45 l1.5 -1.6 h5 l-1 1.6z" fill="#5a90d8"/><rect x="445" y="42.2" width="1.6" height="1.3" fill="#ddd"/><path d="M391 55.6 l2 -1.6 h4.5 l-2 1.6z" fill="#f0f0f0"/><path d="M391 57.4 l2 -1.6 h4.5 l-2 1.6z" fill="#d8d8d8"/><path d="M391 59.2 l2 -1.6 h4.5 l-2 1.6z" fill="#f4f4f4"/><path d="M391 61.0 l2 -1.6 h4.5 l-2 1.6z" fill="#cfcfcf"/><circle cx="397" cy="59" r="1.7" fill="#f8b830"/><path d="M404.5 55.6 l2 -1.6 h4.5 l-2 1.6z" fill="#f0f0f0"/><path d="M404.5 57.4 l2 -1.6 h4.5 l-2 1.6z" fill="#d8d8d8"/><path d="M404.5 59.2 l2 -1.6 h4.5 l-2 1.6z" fill="#f4f4f4"/><path d="M404.5 61.0 l2 -1.6 h4.5 l-2 1.6z" fill="#cfcfcf"/><path d="M403.5 60 l2 -1.3 h4 l-2 1.3z" fill="#4a80d0"/><path d="M409 62 l1.5 -1.5" stroke="#bbb" stroke-width="0.6"/><path d="M417 55.6 l2 -1.6 h4.5 l-2 1.6z" fill="#f0f0f0"/><path d="M417 57.4 l2 -1.6 h4.5 l-2 1.6z" fill="#d8d8d8"/><path d="M417 59.2 l2 -1.6 h4.5 l-2 1.6z" fill="#f4f4f4"/><path d="M417 61.0 l2 -1.6 h4.5 l-2 1.6z" fill="#cfcfcf"/><circle cx="422" cy="59.5" r="1.9" fill="#f0d000"/><path d="M430.5 57.6 l2 -1.6 h4.5 l-2 1.6z" fill="#f0f0f0"/><rect x="432.5" y="59.5" width="3" height="2.2" fill="#e0c040"/><path d="M435 59.5 l1.5 -2" stroke="#e0c040" stroke-width="0.8"/><path d="M442.5 55.6 l2 -1.6 h4.5 l-2 1.6z" fill="#f0f0f0"/><path d="M442.5 57.4 l2 -1.6 h4.5 l-2 1.6z" fill="#d8d8d8"/><path d="M442.5 59.2 l2 -1.6 h4.5 l-2 1.6z" fill="#f4f4f4"/><path d="M442.5 61.0 l2 -1.6 h4.5 l-2 1.6z" fill="#cfcfcf"/><path d="M445.5 61 q2 -2 4 -2.5 l-0.5 2z" fill="#d87020"/></svg>
<div class="t" style="left:432.30px;top:30.00px;font-size:6.9px;line-height:6.90px;color:#e6e6e6;transform:scaleX(0.92);transform-origin:0 0;">0</div>
<svg class="a" style="left:492.80px;top:30.80px;" width="6" height="4" viewBox="0 0 6 4"><path d="M1.40 1.20 L4.60 1.20 L3 3.10Z" fill="#e6e6e6"/></svg>
<div class="t" style="left:452.80px;top:42.00px;font-size:6.9px;line-height:6.90px;color:#eaeaea;transform:scaleX(0.9379203500452735);transform-origin:0 0;">Make Current</div>
<div class="t" style="left:452.80px;top:55.00px;font-size:6.9px;line-height:6.90px;color:#eaeaea;transform:scaleX(0.9377300955633563);transform-origin:0 0;">Match Layer</div>
<div class="t" style="left:415.60px;top:68.00px;font-size:6.9px;line-height:6.90px;color:#dadada;transform:scaleX(0.8595452377934315);transform-origin:0 0;">Layers</div>
<svg class="a" style="left:435.60px;top:68.50px;" width="6" height="4" viewBox="0 0 6 4"><path d="M1.00 1.00 L5.00 1.00 L3 3.30Z" fill="#ececec"/></svg>
<svg class="a" style="left:503.00px;top:27.00px;" width="19" height="17" viewBox="0 0 19 17"><rect x="5" y="1" width="10" height="13" fill="#b8d0ee"/><path d="M11 1 l4 4 h-4z" fill="#e8f0fa"/><rect x="1.5" y="6" width="10" height="6" rx="1" fill="#f0f0f0"/><circle cx="12" cy="12.5" r="3" fill="#e0e0e0" stroke="#666" stroke-width="0.5"/><circle cx="2" cy="13" r="1.2" fill="#4f83cc"/></svg>
<div class="t" style="left:504.40px;top:48.00px;font-size:6.9px;line-height:6.90px;color:#eaeaea;transform:scaleX(0.9330417577840259);transform-origin:0 0;">Insert</div>
<svg class="a" style="left:509.50px;top:54.30px;" width="6" height="4" viewBox="0 0 6 4"><path d="M1.60 1.30 L4.40 1.30 L3 3.00Z" fill="#e0e0e0"/></svg>
<svg class="a" style="left:523.00px;top:28.00px;" width="12" height="34" viewBox="0 0 12 34"><rect x="2" y="3.5" width="6" height="3.5" rx="1" fill="#e8e8e8"/><rect x="4.5" y="5" width="5.5" height="3.5" rx="1" fill="#d0d0d0"/><circle cx="2" cy="7.8" r="1" fill="#4f83cc"/><rect x="1.5" y="16.5" width="6" height="3.5" rx="1" fill="#e8e8e8"/><rect x="4" y="18" width="5.5" height="3.5" rx="1" fill="#d0d0d0"/><path d="M9 13.5 l1 1.5 -1 1.5 -1 -1.5z" fill="#f0c040"/><circle cx="1.5" cy="20.8" r="1" fill="#4f83cc"/><path d="M3 28.5 l3 4 l4 -5" stroke="#e8e8e8" stroke-width="1.4" fill="none"/><path d="M8 26.5 l2.5 -2" stroke="#e8a020" stroke-width="1.2"/></svg>
<div class="t" style="left:536.00px;top:30.00px;font-size:6.9px;line-height:6.90px;color:#eaeaea;transform:scaleX(0.9174921077570335);transform-origin:0 0;">Create</div>
<div class="t" style="left:536.00px;top:42.00px;font-size:6.9px;line-height:6.90px;color:#eaeaea;transform:scaleX(0.9756456555907754);transform-origin:0 0;">Edit</div>
<div class="t" style="left:536.00px;top:55.00px;font-size:6.9px;line-height:6.90px;color:#eaeaea;transform:scaleX(0.9595769404969804);transform-origin:0 0;">Edit Attributes</div>
<svg class="a" style="left:578.80px;top:56.40px;" width="6" height="4" viewBox="0 0 6 4"><path d="M1.60 1.30 L4.40 1.30 L3 3.00Z" fill="#e0e0e0"/></svg>
<div class="t" style="left:532.00px;top:68.00px;font-size:6.9px;line-height:6.90px;color:#dadada;transform:scaleX(0.9838403481965088);transform-origin:0 0;">Block</div>
<svg class="a" style="left:550.20px;top:68.50px;" width="6" height="4" viewBox="0 0 6 4"><path d="M1.00 1.00 L5.00 1.00 L3 3.30Z" fill="#ececec"/></svg>
<svg class="a" style="left:594.00px;top:27.00px;" width="19" height="17" viewBox="0 0 19 17"><rect x="1.5" y="0.5" width="11" height="14" fill="#f2f2f2" stroke="#888" stroke-width="0.4"/><rect x="3" y="2" width="7.5" height="6" fill="#3f6fb5"/><path d="M3 10h7 M3 12h6" stroke="#777" stroke-width="0.6"/><path d="M8.5 14 l3.5 -3 3 2.5 -3 2.5z" fill="#d2851e"/><path d="M13 11 l3 -3" stroke="#555" stroke-width="0.8"/></svg>
<div class="t" style="left:595.00px;top:48.00px;font-size:6.9px;line-height:6.90px;color:#eaeaea;transform:scaleX(0.9899680904942605);transform-origin:0 0;">Match</div>
<div class="t" style="left:589.50px;top:56.00px;font-size:6.9px;line-height:6.90px;color:#eaeaea;transform:scaleX(0.9095051336059264);transform-origin:0 0;">Properties</div>
<svg class="a" style="left:617.00px;top:26.00px;" width="14" height="38" viewBox="0 0 14 38"><path d="M8 6 L8 2.1 A3.9 3.9 0 0 1 11.4 4z" fill="#e8c020"/><path d="M8 6 L11.4 4 A3.9 3.9 0 0 1 11.4 8z" fill="#e03a2a"/><path d="M8 6 L11.4 8 A3.9 3.9 0 0 1 8 9.9z" fill="#c03aa0"/><path d="M8 6 L8 9.9 A3.9 3.9 0 0 1 4.6 8z" fill="#6a40c8"/><path d="M8 6 L4.6 8 A3.9 3.9 0 0 1 4.6 4z" fill="#2a70e0"/><path d="M8 6 L4.6 4 A3.9 3.9 0 0 1 8 2.1z" fill="#40b040"/><path d="M4 14.6h8" stroke="#cfcfcf" stroke-width="0.6"/><path d="M4 16.6h8" stroke="#dcdcdc" stroke-width="0.9"/><path d="M4 19h8" stroke="#e4e4e4" stroke-width="1.2"/><path d="M4 21.8h8" stroke="#eeeeee" stroke-width="1.6"/><path d="M4 29.5h8 M4 31.5h8 M4 34h8" stroke="#b0b0b0" stroke-width="0.7" stroke-dasharray="1.1 0.9"/></svg>
<div class="a" style="left:630.60px;top:26.70px;width:95.60px;height:11.30px;background:linear-gradient(#606060,#4b4b4b);border:0.5px solid #3e3e3e;border-bottom:0.9px solid #383838;border-radius:1.5px"></div>
<svg class="a" style="left:720.00px;top:30.75px;" width="6" height="4" viewBox="0 0 6 4"><path d="M1.40 1.20 L4.60 1.20 L3 3.10Z" fill="#e6e6e6"/></svg>
<div class="a" style="left:630.60px;top:39.20px;width:95.60px;height:11.00px;background:linear-gradient(#606060,#4b4b4b);border:0.5px solid #3e3e3e;border-bottom:0.9px solid #383838;border-radius:1.5px"></div>
<svg class="a" style="left:720.00px;top:43.10px;" width="6" height="4" viewBox="0 0 6 4"><path d="M1.40 1.20 L4.60 1.20 L3 3.10Z" fill="#e6e6e6"/></svg>
<div class="a" style="left:630.60px;top:52.10px;width:95.60px;height:10.90px;background:linear-gradient(#606060,#4b4b4b);border:0.5px solid #3e3e3e;border-bottom:0.9px solid #383838;border-radius:1.5px"></div>
<svg class="a" style="left:720.00px;top:55.95px;" width="6" height="4" viewBox="0 0 6 4"><path d="M1.40 1.20 L4.60 1.20 L3 3.10Z" fill="#e6e6e6"/></svg>
<div class="a" style="left:637.30px;top:28.30px;width:8.20px;height:8.20px;background:#fcfcfc;"></div>
<div class="t" style="left:651.00px;top:30.00px;font-size:6.9px;line-height:6.90px;color:#eaeaea;transform:scaleX(0.8928874575362997);transform-origin:0 0;">ByLayer</div>
<div class="a" style="left:635.20px;top:44.10px;width:31.20px;height:0.90px;background:#dadada;"></div>
<div class="t" style="left:667.50px;top:42.00px;font-size:6.9px;line-height:6.90px;color:#eaeaea;transform:scaleX(0.8928874575362997);transform-origin:0 0;">ByLayer</div>
<div class="a" style="left:632.80px;top:57.30px;width:33.60px;height:1.00px;background:#bdbdbd;"></div>
<div class="t" style="left:667.50px;top:55.00px;font-size:6.9px;line-height:6.90px;color:#eaeaea;transform:scaleX(0.8928874575362997);transform-origin:0 0;">ByLayer</div>
<div class="t" style="left:636.30px;top:68.00px;font-size:6.9px;line-height:6.90px;color:#dadada;transform:scaleX(0.9095051336059264);transform-origin:0 0;">Properties</div>
<svg class="a" style="left:667.20px;top:68.50px;" width="6" height="4" viewBox="0 0 6 4"><path d="M1.00 1.00 L5.00 1.00 L3 3.30Z" fill="#ececec"/></svg>
<svg class="a" style="left:721.00px;top:68.00px;" width="5" height="5" viewBox="0 0 5 5"><path d="M1 1 L4 4 M4 2v2h-2" stroke="#ccc" stroke-width="0.6" fill="none"/></svg>
<svg class="a" style="left:730.00px;top:27.00px;" width="20" height="18" viewBox="0 0 20 18"><rect x="1.5" y="1.5" width="9" height="13.5" fill="none" stroke="#999" stroke-width="0.5" stroke-dasharray="0.8 0.8"/><rect x="2.5" y="3" width="4.5" height="4" fill="#e6d060"/><circle cx="4.8" cy="11.8" r="2.3" fill="#e8e8e8" stroke="#333" stroke-width="0.5"/><path d="M12 2 v11 M6.5 7.5 h11 M8 3.5 l8 8 M16 3.5 l-8 8" stroke="#bfe0ff" stroke-width="0.8"/><circle cx="12" cy="7.5" r="2.5" fill="#fff"/></svg>
<div class="t" style="left:730.80px;top:48.00px;font-size:6.9px;line-height:6.90px;color:#eaeaea;transform:scaleX(0.928266328996752);transform-origin:0 0;">Group</div>
<svg class="a" style="left:751.00px;top:27.00px;" width="13" height="37" viewBox="0 0 13 37"><rect x="2" y="2" width="6" height="3" fill="#e6d060"/><rect x="2" y="5.5" width="4" height="2" fill="#ddd"/><path d="M7 7 l3.5 -4.5" stroke="#e8a020" stroke-width="1"/><rect x="2.5" y="14.5" width="4" height="7" fill="#ddd" opacity="0.8"/><rect x="3.3" y="17" width="2.4" height="2" fill="#4f83cc"/><path d="M8.5 16.5 h3 M10 15 v3" stroke="#bbb" stroke-width="0.6"/></svg>
<div class="a" style="left:750.80px;top:52.80px;width:12.00px;height:10.60px;background:linear-gradient(#5f8fd0,#3e6fb8);border:0.6px solid #2a4a80"></div>
<svg class="a" style="left:751.00px;top:53.00px;" width="12" height="10" viewBox="0 0 12 10"><rect x="3" y="2" width="2.2" height="2" fill="#e8d060"/><rect x="3" y="5.5" width="2.2" height="2" fill="#e8d060"/><path d="M6 3 l3 4" stroke="#eee" stroke-width="0.7"/></svg>
<div class="t" style="left:732.30px;top:68.00px;font-size:6.9px;line-height:6.90px;color:#dadada;transform:scaleX(0.9281550018853147);transform-origin:0 0;">Groups</div>
<svg class="a" style="left:755.30px;top:68.50px;" width="6" height="4" viewBox="0 0 6 4"><path d="M1.00 1.00 L5.00 1.00 L3 3.30Z" fill="#ececec"/></svg>
<svg class="a" style="left:774.00px;top:30.00px;" width="20" height="14" viewBox="0 0 20 14"><path d="M1.5 1 v5 M18.5 1 v5 M2 3.5 h16" stroke="#e0e0e0" stroke-width="0.8"/><path d="M2 3.5 l2 -1.5 v3z M18 3.5 l-2 -1.5 v3z" fill="#e0e0e0"/><rect x="1.5" y="8.2" width="17" height="3.2" rx="0.5" fill="#e8b818"/><path d="M3 9.8h14" stroke="#b38a10" stroke-width="0.4" stroke-dasharray="0.6 0.9"/></svg>
<div class="t" style="left:771.70px;top:48.00px;font-size:6.9px;line-height:6.90px;color:#eaeaea;transform:scaleX(0.9276107387707063);transform-origin:0 0;">Measure</div>
<svg class="a" style="left:780.60px;top:55.00px;" width="6" height="4" viewBox="0 0 6 4"><path d="M1.50 1.25 L4.50 1.25 L3 3.05Z" fill="#e0e0e0"/></svg>
<svg class="a" style="left:804.00px;top:27.00px;" width="13" height="36" viewBox="0 0 13 36"><path d="M5 6 h-4 M5 6 v-4.5" stroke="#ddd" stroke-width="0.6"/><circle cx="5" cy="6" r="1.8" fill="none" stroke="#ddd" stroke-width="0.6"/><rect x="6.5" y="6" width="4.5" height="4" fill="#ccc"/><path d="M9 1 l-1 3 l2 0 l-1 2.5" stroke="#f0b020" stroke-width="0.8" fill="none"/><path d="M6.5 14 v8 M2.5 18 h8" stroke="#ccc" stroke-width="0.9"/><circle cx="6.5" cy="18" r="1" fill="#ddd"/><rect x="3.5" y="27" width="5.5" height="7" fill="#d8d8d8"/><rect x="4.3" y="28" width="4" height="1.8" fill="#777"/></svg>
<div class="t" style="left:775.60px;top:68.00px;font-size:6.9px;line-height:6.90px;color:#dadada;transform:scaleX(0.9758805445761969);transform-origin:0 0;">Utilities</div>
<svg class="a" style="left:799.30px;top:68.50px;" width="6" height="4" viewBox="0 0 6 4"><path d="M1.00 1.00 L5.00 1.00 L3 3.30Z" fill="#ececec"/></svg>
<svg class="a" style="left:823.00px;top:27.00px;" width="18" height="18" viewBox="0 0 18 18"><rect x="1.5" y="2" width="10.5" height="13.5" rx="1" fill="#c8b8a0"/><rect x="4.5" y="0.8" width="4.5" height="2.5" rx="0.8" fill="#e8e8e8" stroke="#777" stroke-width="0.4"/><path d="M5 5 h6 l3 3 v9 h-9z" fill="#f4f4f4" stroke="#555" stroke-width="0.5"/></svg>
<div class="t" style="left:823.30px;top:48.00px;font-size:6.9px;line-height:6.90px;color:#eaeaea;transform:scaleX(0.9238521588579373);transform-origin:0 0;">Paste</div>
<svg class="a" style="left:828.00px;top:55.00px;" width="6" height="4" viewBox="0 0 6 4"><path d="M1.50 1.25 L4.50 1.25 L3 3.05Z" fill="#e0e0e0"/></svg>
<svg class="a" style="left:846.00px;top:27.00px;" width="11" height="25" viewBox="0 0 11 25"><path d="M2 2 l7 6 M9 2 l-7 6" stroke="#d8d8d8" stroke-width="0.8"/><circle cx="2.3" cy="8.3" r="1.2" fill="none" stroke="#ccc" stroke-width="0.6"/><circle cx="8.7" cy="8.3" r="1.2" fill="none" stroke="#ccc" stroke-width="0.6"/><rect x="1.8" y="14" width="5" height="6.5" fill="#ddd"/><rect x="4" y="16" width="5" height="6.5" fill="#f2f2f2" stroke="#888" stroke-width="0.4"/></svg>
<div class="t" style="left:824.00px;top:68.00px;font-size:6.9px;line-height:6.90px;color:#dadada;transform:scaleX(0.9684410131382906);transform-origin:0 0;">Clipboard</div>
<svg class="a" style="left:867.00px;top:30.00px;" width="17" height="13" viewBox="0 0 17 13"><path d="M1.5 1.5 h5 l1 2 h8 v8 h-14z" fill="#f0f0f0" stroke="#333" stroke-width="0.5"/></svg>
<div class="t" style="left:869.40px;top:48.00px;font-size:6.9px;line-height:6.90px;color:#eaeaea;transform:scaleX(0.8838523084382262);transform-origin:0 0;">Base</div>
<svg class="a" style="left:873.00px;top:55.00px;" width="6" height="4" viewBox="0 0 6 4"><path d="M1.50 1.25 L4.50 1.25 L3 3.05Z" fill="#e0e0e0"/></svg>
<div class="t" style="left:861.60px;top:68.00px;font-size:6.9px;line-height:6.90px;color:#dadada;transform:scaleX(0.9507313804569072);transform-origin:0 0;">View</div>
<svg class="a" style="left:877.20px;top:68.50px;" width="6" height="4" viewBox="0 0 6 4"><path d="M1.00 1.00 L5.00 1.00 L3 3.30Z" fill="#ececec"/></svg>
<svg class="a" style="left:885.00px;top:68.00px;" width="6" height="6" viewBox="0 0 6 6"><path d="M1.5 1.5 L4.5 4.5 M4.5 2.3v2.2h-2.2" stroke="#ccc" stroke-width="0.6" fill="none"/></svg>
<div class="a" style="left:0.00px;top:77.00px;width:1024.00px;height:13.00px;background:#3a3a3a;"></div>
<div class="a" style="left:0.00px;top:89.80px;width:1024.00px;height:2.30px;background:#565656;"></div>
<div class="a" style="left:0.00px;top:77.00px;width:12.00px;height:13.00px;background:#333;"></div>
<svg class="a" style="left:10.00px;top:77.00px;" width="69" height="15" viewBox="0 0 69 15"><path d="M0 14.8 Q2 14.8 2.5 12 L3.8 3.8 Q4.3 1.5 7 1.5 L62.00 1.5 Q64.70 1.5 65.20 3.8 L66.50 12 Q67.00 14.8 69.00 14.8Z" fill="#555555"/></svg>
<div class="t" style="left:17.00px;top:82.00px;font-size:6.9px;line-height:6.90px;color:#c4c4c4;transform:scaleX(0.9265067799063841);transform-origin:0 0;">Start</div>
<svg class="a" style="left:76.00px;top:77.00px;" width="69" height="15" viewBox="0 0 69 15"><path d="M0 14.8 Q2 14.8 2.5 12 L3.8 3.8 Q4.3 1.5 7 1.5 L62.00 1.5 Q64.70 1.5 65.20 3.8 L66.50 12 Q67.00 14.8 69.00 14.8Z" fill="#4f4f4f"/></svg>
<div class="t" style="left:82.60px;top:82.00px;font-size:6.9px;line-height:6.90px;color:#c4c4c4;transform:scaleX(0.9264039603769306);transform-origin:0 0;">Drawing1</div>
<svg class="a" style="left:133.50px;top:81.30px;" width="6" height="6" viewBox="0 0 6 6"><path d="M1 1 L5 5 M5 1 L1 5" stroke="#3a3a3a" stroke-width="1.1"/></svg>
<svg class="a" style="left:219.00px;top:77.00px;" width="17" height="15" viewBox="0 0 17 15"><path d="M0 14.8 Q2 14.8 2.5 12 L3.8 5 Q4.3 3 7 3 L11 3 Q13.7 3 14.2 5 L15.5 12 Q16 14.8 17 14.8Z" fill="#4c4c4c"/><path d="M6.2 8.6h5.2 M8.8 6v5.2" stroke="#e6e6e6" stroke-width="1.2"/></svg>
<svg class="a" style="left:141.00px;top:77.00px;" width="79" height="15" viewBox="0 0 79 15"><path d="M0 14.8 Q2 14.8 2.5 12 L3.8 3.8 Q4.3 1.5 7 1.5 L72.00 1.5 Q74.70 1.5 75.20 3.8 L76.50 12 Q77.00 14.8 79.00 14.8Z" fill="#5e5e5e"/></svg>
<div class="t" style="left:148.20px;top:82.00px;font-size:6.9px;line-height:6.90px;color:#efefef;transform:scaleX(0.882766216779847);transform-origin:0 0;">Sierra CSH Pattern*</div>
<svg class="a" style="left:206.30px;top:81.30px;" width="6" height="6" viewBox="0 0 6 6"><path d="M1 1 L5 5 M5 1 L1 5" stroke="#3a3a3a" stroke-width="1.1"/></svg>
<div class="t" style="left:1.70px;top:96.00px;font-size:7.0px;line-height:7.00px;color:#e2e2e2;transform:scaleX(0.8880549566845396);transform-origin:0 0;font-weight:bold;">[&minus;][Top][2D Wireframe]</div>
<svg class="a" style="left:990.00px;top:96.00px;" width="32" height="10" viewBox="0 0 32 10"><rect x="1.5" y="5" width="5.5" height="1.8" fill="#e8e8e8"/><rect x="12" y="3.2" width="4.6" height="4.6" fill="none" stroke="#e8e8e8" stroke-width="1"/><path d="M13.5 2 h4.5 v4.5" stroke="#e8e8e8" stroke-width="0.8" fill="none"/><path d="M23.5 2.5 L28.5 7.5 M28.5 2.5 L23.5 7.5" stroke="#e8e8e8" stroke-width="1.2"/></svg>
<svg class="a" style="left:940.00px;top:108.00px;" width="80" height="100" viewBox="0 0 80 100"><circle cx="39.6" cy="40.9" r="28.5" fill="none" stroke="#4b5059" stroke-width="7"/><rect x="26.1" y="27" width="27.4" height="27.5" fill="#c3c6ca"/><rect x="31.3" y="32" width="16.7" height="17.2" fill="#b3b7bd"/><text x="39.6" y="44.2" font-size="8" text-anchor="middle" fill="#4f555e" font-family="Liberation Sans" transform="translate(39.6 0) scale(0.78 1) translate(-39.6 0)">TOP</text><text x="39.6" y="15.3" font-size="11" font-weight="bold" text-anchor="middle" fill="#d4d6da" font-family="Liberation Sans">N</text><text x="39.6" y="75.7" font-size="11" font-weight="bold" text-anchor="middle" fill="#d4d6da" font-family="Liberation Sans">S</text><text x="10" y="45.1" font-size="11" font-weight="bold" text-anchor="middle" fill="#d4d6da" font-family="Liberation Sans">W</text><text x="69.9" y="45.1" font-size="11" font-weight="bold" text-anchor="middle" fill="#d4d6da" font-family="Liberation Sans">E</text><rect x="27.3" y="87.2" width="25" height="9.4" rx="2" fill="#8d929b"/><text x="36.5" y="94.3" font-size="6.5" text-anchor="middle" fill="#5d626b" font-family="Liberation Sans">WCS</text><path d="M46.5 91.2 h3 l-1.5 1.8z" fill="#6d727b"/></svg>
<svg class="a" style="left:1004.00px;top:217.00px;" width="20" height="115" viewBox="0 0 20 115"><rect x="0.6" y="0.5" width="17.3" height="113.1" rx="2.5" fill="#575c64"/><circle cx="14.5" cy="4" r="1.6" fill="none" stroke="#42474e" stroke-width="0.6"/><circle cx="14.5" cy="110" r="1.6" fill="none" stroke="#42474e" stroke-width="0.6"/><circle cx="9" cy="16.8" r="5" fill="none" stroke="#42474e" stroke-width="1.2"/><circle cx="9" cy="16.8" r="2.6" fill="none" stroke="#42474e" stroke-width="0.8"/><path d="M8 27.2 h2 l-1 1.3z" fill="#2f3339"/><path d="M6 45 q-3 -3 -2.5 -6 l1 -1 l1.5 1.8 v-5.3 q0.7 -0.8 1.4 0 v4 v-5 q0.7 -0.8 1.4 0 v5 v-4.5 q0.7 -0.8 1.4 0 v4.8 v-3.8 q0.7 -0.8 1.4 0 v5 q0 3.5 -2 5z" fill="none" stroke="#42474e" stroke-width="0.9"/><path d="M4 48.5 l9 9 M13 48.5 l-9 9" stroke="#42474e" stroke-width="0.9"/><circle cx="12" cy="56" r="2.4" fill="#575c64" stroke="#42474e" stroke-width="0.9"/><path d="M13.8 58 l2.2 2.4" stroke="#42474e" stroke-width="1.1"/><path d="M8 64.4 h2 l-1 1.3z" fill="#2f3339"/><ellipse cx="9" cy="74.5" rx="5.5" ry="2.3" fill="none" stroke="#42474e" stroke-width="0.9"/><path d="M9 68.8 v11.5" stroke="#42474e" stroke-width="1"/><path d="M8 84.9 h2 l-1 1.3z" fill="#2f3339"/><path d="M3.5 92.5 h11" stroke="#42474e" stroke-width="1.6" stroke-dasharray="2.4 1.1"/><rect x="3.5" y="95.5" width="11" height="8" fill="none" stroke="#42474e" stroke-width="0.8"/><path d="M7.5 97.5 l3.2 2 -3.2 2z" fill="#42474e"/></svg>
<svg class="a" style="left:0.00px;top:505.00px;" width="60" height="52" viewBox="0 0 60 52"><path d="M11.5 16.4 V43.4 H38.5" stroke="#c8c8c8" stroke-width="0.9" fill="none"/><rect x="9" y="41" width="5" height="5" fill="none" stroke="#c8c8c8" stroke-width="0.8"/><path d="M12 7.2 L15.5 11 L19 7.2 M15.5 11 V15" stroke="#c8c8c8" stroke-width="0.9" fill="none"/><path d="M40.2 36 L47.2 43 M47.2 36 L40.2 43" stroke="#c8c8c8" stroke-width="0.9"/></svg>
<div class="a" style="left:248.80px;top:546.00px;width:28.50px;height:13.30px;background:linear-gradient(#5a5a5a,#3e3e3e);"></div>
<svg class="a" style="left:249.00px;top:546.00px;" width="28" height="14" viewBox="0 0 28 14"><path d="M1.5 2.5v9" stroke="#777" stroke-width="1.6" stroke-dasharray="0.7 0.7"/><path d="M8.5 4.5 L12.5 8.5 M12.5 4.5 L8.5 8.5" stroke="#e8e8e8" stroke-width="1"/><path d="M17.5 4 q1.5 -1.5 3 0 q0 1.5 -1 2 l4 4 -1 1 -4 -4 q-1 0.5 -2 0z" fill="#e0e0e0"/></svg>
<div class="a" style="left:277.30px;top:546.00px;width:497.70px;height:13.30px;background:#c9cacb;"></div>
<div class="a" style="left:280.00px;top:548.00px;width:9.00px;height:9.00px;background:#a5adb8;border:0.5px solid #8a929c"></div>
<svg class="a" style="left:280.00px;top:548.00px;" width="9" height="9" viewBox="0 0 9 9"><path d="M2 2.5 l2 2 -2 2" stroke="#2a3040" stroke-width="0.8" fill="none"/><path d="M4.5 6.8 h2.5" stroke="#2a3040" stroke-width="0.7"/></svg>
<svg class="a" style="left:288.50px;top:550.50px;" width="6" height="4" viewBox="0 0 6 4"><path d="M1.80 1.40 L4.20 1.40 L3 2.90Z" fill="#666"/></svg>
<div class="t" style="left:297.10px;top:549.00px;font-size:6.4px;line-height:6.40px;color:#8c8c8c;transform:scaleX(0.985);transform-origin:0 0;font-style:italic;word-spacing:1.6px;">Type a command</div>
<svg class="a" style="left:767.00px;top:549.00px;" width="8" height="5" viewBox="0 0 8 5"><path d="M1.5 4 L4 1 L6.5 4z" fill="#333"/></svg>
<div class="a" style="left:0.00px;top:559.80px;width:1024.00px;height:15.00px;background:#3b3b3b;"></div>
<svg class="a" style="left:4.00px;top:560.00px;" width="35" height="10.5" viewBox="0 0 35 10.5"><path d="M0 0 L35.00 0 L31.50 8 Q30.50 10 28.00 10 L7 10 Q4.5 10 3.5 8Z" fill="#717171"/></svg>
<div class="t" style="left:12.50px;top:562.00px;font-size:6.9px;line-height:6.90px;color:#f2f2f2;transform:scaleX(0.9708874871230402);transform-origin:0 0;font-weight:bold;">Model</div>
<svg class="a" style="left:36.00px;top:560.00px;" width="37" height="10.5" viewBox="0 0 37 10.5"><path d="M0 0 L37.00 0 L33.50 8 Q32.50 10 30.00 10 L7 10 Q4.5 10 3.5 8Z" fill="#585858"/></svg>
<div class="t" style="left:43.50px;top:562.00px;font-size:6.9px;line-height:6.90px;color:#c8c8c8;transform:scaleX(0.9286359323302386);transform-origin:0 0;">Layout1</div>
<svg class="a" style="left:71.00px;top:560.00px;" width="37" height="10.5" viewBox="0 0 37 10.5"><path d="M0 0 L37.00 0 L33.50 8 Q32.50 10 30.00 10 L7 10 Q4.5 10 3.5 8Z" fill="#585858"/></svg>
<div class="t" style="left:78.00px;top:562.00px;font-size:6.9px;line-height:6.90px;color:#c8c8c8;transform:scaleX(0.9286359323302386);transform-origin:0 0;">Layout2</div>
<svg class="a" style="left:106.00px;top:560.00px;" width="16" height="10.5" viewBox="0 0 16 10.5"><path d="M0 0 L14 0 L11 8 Q10 10 8 10 L5 10 Q3 10 2.5 8Z" fill="#4d4d4d"/><path d="M5 4.8h4.5 M7.25 2.5v4.6" stroke="#e0e0e0" stroke-width="1.1"/></svg>
<div class="a" style="left:684.80px;top:559.80px;width:339.20px;height:14.50px;background:#525252;border-left:1px solid #2f2f2f"></div>
<div class="a" style="left:711.60px;top:560.00px;width:1.20px;height:14.30px;background:#3e3e3e;"></div>
<div class="a" style="left:746.40px;top:560.00px;width:1.20px;height:14.30px;background:#3e3e3e;"></div>
<div class="a" style="left:802.40px;top:560.00px;width:1.20px;height:14.30px;background:#3e3e3e;"></div>
<div class="a" style="left:836.30px;top:560.00px;width:1.20px;height:14.30px;background:#3e3e3e;"></div>
<div class="a" style="left:858.10px;top:560.00px;width:1.20px;height:14.30px;background:#3e3e3e;"></div>
<div class="a" style="left:918.20px;top:560.00px;width:1.20px;height:14.30px;background:#3e3e3e;"></div>
<div class="a" style="left:940.00px;top:560.00px;width:1.20px;height:14.30px;background:#3e3e3e;"></div>
<div class="a" style="left:953.90px;top:560.00px;width:1.20px;height:14.30px;background:#3e3e3e;"></div>
<div class="a" style="left:968.40px;top:560.00px;width:1.20px;height:14.30px;background:#3e3e3e;"></div>
<div class="a" style="left:982.40px;top:560.00px;width:1.20px;height:14.30px;background:#3e3e3e;"></div>
<div class="a" style="left:996.30px;top:560.00px;width:1.20px;height:14.30px;background:#3e3e3e;"></div>
<div class="t" style="left:688.00px;top:565.00px;font-size:6.7px;line-height:6.70px;color:#e8e8e8;transform:scaleX(0.9485504504368618);transform-origin:0 0;">MODEL</div>
<svg class="a" style="left:0.00px;top:0.00px;" width="1024" height="576" viewBox="0 0 1024 576"><rect x="715.5" y="563.3" width="8" height="7.5" rx="1" fill="#2a7de1"/><path d="M718.2 563.3v7.5 M720.8 563.3v7.5 M715.5 565.8h8 M715.5 568.3h8" stroke="#1c5fb0" stroke-width="0.5"/><path d="M728 564h8 M728 566.3h8 M728 568.6h8 M728 570.6h8 M728.5 563.5v7.5 M730.8 563.5v7.5 M733 563.5v7.5 M735.5 563.5v7.5" stroke="#6a6a6a" stroke-width="0.5" stroke-dasharray="0.6 0.6"/><path d="M751.5 562.5 v8 h7" stroke="#bbb" stroke-width="0.8" fill="none"/><path d="M753.5 568.5 h1.5" stroke="#bbb" stroke-width="0.6"/><circle cx="767" cy="567" r="3.7" fill="none" stroke="#2a7de1" stroke-width="1.6"/><path d="M767 567 l3.5 -0.5" stroke="#2a7de1" stroke-width="1"/><path d="M785 562 l7 9.5 M789.5 561.8 l-4 3.5 v5.5" stroke="#9a9a9a" stroke-width="0.8" fill="none"/><path d="M805.5 570.5 l7 -6 M805.5 570.5 h8" stroke="#2a7de1" stroke-width="1.2" fill="none"/><rect x="819.5" y="563.2" width="7" height="7" fill="none" stroke="#2a7de1" stroke-width="1.1"/><circle cx="820" cy="563.2" r="1.1" fill="#2a2"/><path d="M842 565 l3.5 -1.5 3.5 1.5 v4 l-3.5 1.8 -3.5 -1.8z M842 565 l3.5 1.6 3.5 -1.6 M845.5 566.6 v4.2" stroke="#ccc" stroke-width="0.6" fill="none"/><circle cx="840.8" cy="564.3" r="1" fill="#2a2"/><path d="M863.5 571.5 l3 -4.5 v-3 a2 2 0 1 1 2 2 l-2 1 l3.5 4.5" stroke="#2a7de1" stroke-width="1.5" fill="none"/><path d="M876 571 l3.5 -4 v-3.5 M879.5 567 l3.5 4 M879.5 567 l2 -3" stroke="#bbb" stroke-width="1.2" fill="none"/><path d="M887.5 571 l3.5 -4 v-3.5 M891 567 l3.5 4" stroke="#bbb" stroke-width="1.2" fill="none"/><text x="900.8" y="569.7" font-size="6.5" fill="#c8c8d8" font-family="Liberation Sans">1:1</text><path d="M925.5 563.3 a3.5 3.5 0 1 1 -0.01 0z" fill="#aaa"/><circle cx="925.5" cy="566.8" r="1.4" fill="#525252"/><path d="M947 563 v8 M943 567 h8" stroke="#d8d8d8" stroke-width="1"/><rect x="957.5" y="563" width="4" height="3" fill="none" stroke="#bbb" stroke-width="0.6"/><circle cx="964" cy="566.5" r="1.8" fill="none" stroke="#bbb" stroke-width="0.6"/><path d="M958.5 571 l2 -3 2 3z" fill="none" stroke="#bbb" stroke-width="0.6"/><circle cx="975.8" cy="567" r="4.6" fill="#1e6fd8"/><circle cx="975.8" cy="567" r="3.6" fill="none" stroke="#0d4fa8" stroke-width="0.5"/><path d="M974.5 568.5 l2.5 -2.5" stroke="#9cc4f0" stroke-width="0.6"/><rect x="986" y="562.5" width="6" height="4" fill="#7ea6d8"/><rect x="986" y="566.5" width="7" height="3" fill="#e8c840"/><path d="M990 569.5 l1.5 1.5 3 -3" stroke="#2a2" stroke-width="1.1" fill="none"/><rect x="999.5" y="563.3" width="8.5" height="6.8" fill="none" stroke="#ccc" stroke-width="0.9"/><path d="M1001.5 568 l2 -2 M1004.5 565.3 h2" stroke="#ccc" stroke-width="0.7"/><path d="M1012 564 h9 M1012 567 h9 M1012 570 h9" stroke="#d8d8d8" stroke-width="1.1"/></svg>
<svg class="a" style="left:739.70px;top:565.30px;" width="6" height="4" viewBox="0 0 6 4"><path d="M1.50 1.25 L4.50 1.25 L3 3.05Z" fill="#e0e0e0"/></svg>
<svg class="a" style="left:774.50px;top:565.30px;" width="6" height="4" viewBox="0 0 6 4"><path d="M1.50 1.25 L4.50 1.25 L3 3.05Z" fill="#e0e0e0"/></svg>
<svg class="a" style="left:795.60px;top:565.30px;" width="6" height="4" viewBox="0 0 6 4"><path d="M1.50 1.25 L4.50 1.25 L3 3.05Z" fill="#e0e0e0"/></svg>
<svg class="a" style="left:829.70px;top:565.30px;" width="6" height="4" viewBox="0 0 6 4"><path d="M1.50 1.25 L4.50 1.25 L3 3.05Z" fill="#e0e0e0"/></svg>
<svg class="a" style="left:851.00px;top:565.30px;" width="6" height="4" viewBox="0 0 6 4"><path d="M1.50 1.25 L4.50 1.25 L3 3.05Z" fill="#e0e0e0"/></svg>
<svg class="a" style="left:911.30px;top:565.30px;" width="6" height="4" viewBox="0 0 6 4"><path d="M1.50 1.25 L4.50 1.25 L3 3.05Z" fill="#e0e0e0"/></svg>
<svg class="a" style="left:933.00px;top:565.30px;" width="6" height="4" viewBox="0 0 6 4"><path d="M1.50 1.25 L4.50 1.25 L3 3.05Z" fill="#e0e0e0"/></svg>
<div class="a" style="left:2.50px;top:574.75px;width:1021.50px;height:1.25px;background:#c4c4c4;"></div>
</body></html>
